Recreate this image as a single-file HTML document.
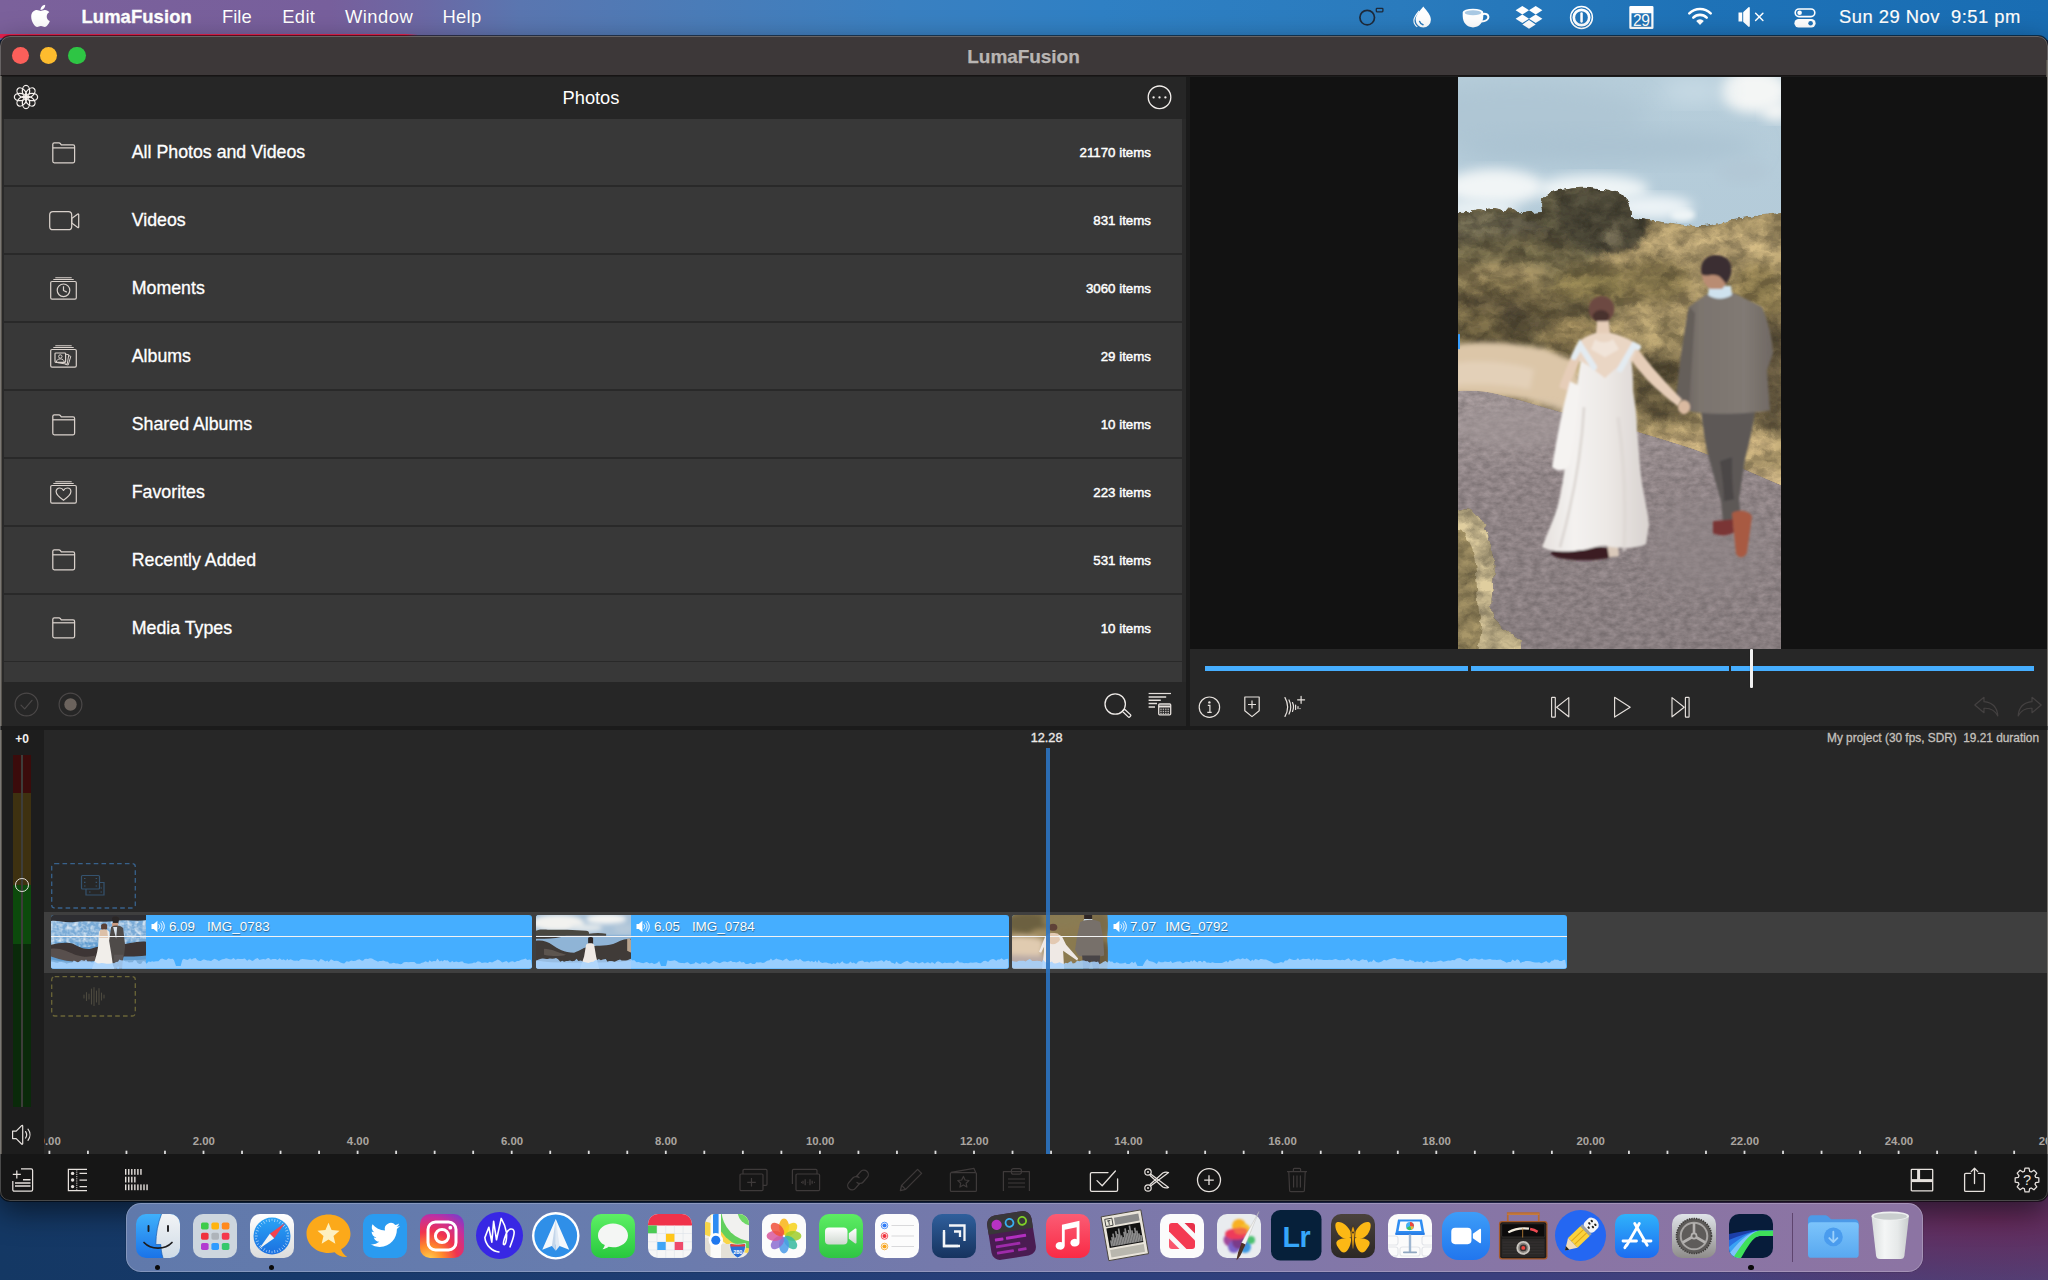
<!DOCTYPE html>
<html lang="en">
<head>
<meta charset="utf-8">
<title>LumaFusion</title>
<style>

*{box-sizing:border-box;margin:0;padding:0}
html,body{width:2048px;height:1280px;overflow:hidden;background:#1d3a69}
body{position:relative;font-family:"Liberation Sans",sans-serif;color:#fff;-webkit-font-smoothing:antialiased}
.abs{position:absolute}
svg{position:absolute;overflow:visible}
#desktop{position:absolute;left:0;top:0;width:2048px;height:1280px;
  background:
   linear-gradient(90deg,#e9214e 0,#e9214e 405px,rgba(233,33,78,0) 418px) 0 34px/2048px 4px no-repeat,
   linear-gradient(90deg,#7b619b 0,#775f9c 330px,#6c68a4 420px,#5a76b0 520px,#4a7cb8 700px,#3a80c1 900px,#2f80c4 1100px,#2a7bbd 1400px,#1e72b7 1700px,#196db3 2048px) 0 0/2048px 40px no-repeat,
   radial-gradient(ellipse 380px 80px at 1990px 1218px,#652a5a 0,rgba(101,42,90,0) 100%),
   linear-gradient(90deg,#143864 0,#17396a 300px,#1f3d73 700px,#2b3f7b 1100px,#3a3f7d 1500px,#47417c 1800px,#50437a 2048px) 0 1190px/2048px 90px no-repeat;
}
/* ---------- menu bar ---------- */
#menubar{position:absolute;left:0;top:0;width:2048px;height:34px;font-size:18.4px;line-height:34px;color:#fff;white-space:nowrap;text-shadow:0 0 1px rgba(0,0,0,.15)}
#menubar .mi{position:absolute;top:0;height:34px}
/* ---------- window ---------- */
#win{position:absolute;left:0;top:36px;width:2048px;height:1165px;border-radius:10px;overflow:hidden;background:#1c1c1c;
  box-shadow:0 0 0 1px rgba(0,0,0,.55),0 10px 30px rgba(0,0,0,.55)}
#win:after{content:"";position:absolute;left:0;top:0;right:0;bottom:0;border-radius:10px;border:1px solid rgba(255,255,255,.22);pointer-events:none}
#titlebar{position:absolute;left:0;top:0;width:100%;height:39.5px;background:#3d3839;border-bottom:1.5px solid #171414}
.tl{position:absolute;top:10.7px;width:17.4px;height:17.4px;border-radius:50%}
#wtitle{position:absolute;left:0;width:2047px;top:1.5px;height:38px;line-height:37.5px;text-align:center;font-weight:bold;font-size:19px;color:#b9b5b3;letter-spacing:-.05px;-webkit-text-stroke:.25px #b9b5b3}
#content{position:absolute;left:0;top:-36px;width:2048px;height:1280px}
/* ---------- library ---------- */
#libedge{position:absolute;left:0;top:76px;width:1.7px;height:1126px;background:#57534d}
#redge{position:absolute;left:2046.300px;top:60px;width:1.700px;height:1136px;background:#56524c}
#libhead{position:absolute;left:1.7px;top:76.5px;width:1184.3px;height:42.5px;background:#262626}
#libhead .t{position:absolute;left:2.8px;width:1173px;top:0;height:42px;line-height:41px;text-align:center;font-size:18.3px;color:#fff}
#liblist{position:absolute;left:1.7px;top:119px;width:1184.3px;height:563px;background:#292929;overflow:hidden}
.row{position:absolute;left:2.8px;width:1177.5px;height:66px;background:#383838}
.row .n{position:absolute;left:127.3px;top:1.2px;height:65px;line-height:65px;font-size:17.75px;color:#fff;white-space:nowrap;-webkit-text-stroke:.3px #fff}
.row .c{position:absolute;right:31px;top:0;height:66px;line-height:67.5px;font-size:13.3px;color:#fff;white-space:nowrap;-webkit-text-stroke:.45px #fff}
#libtool{position:absolute;left:1.7px;top:682px;width:1184.3px;height:44px;background:#262626}
#vsep{position:absolute;left:1186px;top:76px;width:4px;height:654px;background:#1b1b1b}
#hsep{position:absolute;left:0;top:726px;width:2048px;height:4px;background:#1b1b1b}
/* ---------- preview ---------- */
#pv{position:absolute;left:1190px;top:76.5px;width:857px;height:572.5px;background:#121212}
#pvctl{position:absolute;left:1190px;top:649px;width:857px;height:77px;background:#272727}
/* ---------- timeline ---------- */
#tlleft{position:absolute;left:1.7px;top:730px;width:42.3px;height:424px;background:#1d1d1d}
#tl{position:absolute;left:44px;top:730px;width:2003px;height:424px;background:#272727;overflow:hidden}
#track{position:absolute;left:0;top:181.5px;width:2003px;height:61px;background:#3f3f3f}
.clip{position:absolute;top:185px;height:54px;background:#45aeff;border-radius:3px;overflow:hidden}
.clip .lbl{position:absolute;top:2.6px;height:18px;line-height:18px;font-size:13.45px;color:#fff;white-space:pre;text-shadow:0.5px 1px 1px rgba(0,0,0,.45)}
.clip .wl{position:absolute;left:0;right:0;top:20.5px;height:1.3px;background:#f4f4f4}
.rl{position:absolute;top:403px;height:16px;line-height:16px;width:60px;margin-left:-30px;text-align:center;font-size:11.4px;font-weight:bold;color:#aaa5a0}
#tbar{position:absolute;left:0;top:1154px;width:2048px;height:48px;background:#161616}
/* ---------- dock ---------- */
#dock{position:absolute;left:126px;top:1203px;width:1796.5px;height:69px;border-radius:15px;
  background:linear-gradient(90deg,#6079ab 0,#677cae 25%,#7479ab 45%,#7e78aa 60%,#8975a5 80%,#8c74a3 100%);
  box-shadow:inset 0 0 0 1px rgba(255,255,255,.22),0 0 0 .5px rgba(0,0,0,.2)}
.di{position:absolute;top:1213.5px;width:44px;height:44px;border-radius:10px;overflow:hidden}
.dot{position:absolute;top:1264.500px;width:5.4px;height:5.4px;border-radius:50%;background:#0a0a0a}

</style>
</head>
<body>
<div id="desktop"></div>

<div id="menubar">
  <svg style="left:30.500px;top:3.600px" width="19" height="23.500" viewBox="0 20 384 470"><path fill="#fff" d="M318.7 268.7c-.2-36.7 16.4-64.4 50-84.8-18.8-26.9-47.200-41.700-84.700-44.600-35.500-2.800-74.300 20.700-88.500 20.700-15 0-49.400-19.700-76.400-19.700C63.300 141.200 4 184.800 4 273.500q0 39.300 14.400 81.200c12.800 36.700 59 126.700 107.200 125.200 25.200-.6 43-17.900 75.800-17.900 31.800 0 48.300 17.900 76.400 17.900 48.600-.7 90.400-82.500 102.600-119.300-65.200-30.700-61.700-90-61.700-91.900zm-56.600-164.200c27.300-32.400 24.800-61.900 24-72.500-24.100 1.400-52 16.400-67.900 34.900-17.500 19.800-27.800 44.300-25.600 71.900 26.100 2 49.900-11.400 69.500-34.300z"/></svg>
  <span class="mi" style="left:81.5px;font-weight:bold;letter-spacing:.1px;-webkit-text-stroke:.35px #fff">LumaFusion</span>
  <span class="mi" style="left:222px">File</span>
  <span class="mi" style="left:282.3px;letter-spacing:.3px">Edit</span>
  <span class="mi" style="left:345px;letter-spacing:.45px">Window</span>
  <span class="mi" style="left:442.5px;letter-spacing:.3px">Help</span>

  <!-- status icons -->
  <svg style="left:1355px;top:4px" width="34" height="28" viewBox="0 0 34 28">
    <circle cx="12.2" cy="13.6" r="7.3" fill="none" stroke="#1e2a3a" stroke-width="1.7"/>
    <rect x="21.3" y="4.4" width="6.6" height="3.4" rx=".7" fill="none" stroke="#1e2a3a" stroke-width="1.3"/>
  </svg>
  <svg style="left:1411px;top:5px" width="24" height="24" viewBox="0 0 24 24">
    <path fill="#fff" d="M12.3 1.6c3.6 4.6 7.6 8.600 7.600 13.200a7.600 7.600 0 0 1-15.200 0c0-4.600 4-8.600 7.600-13.200z"/>
    <path fill="none" stroke="#fff" stroke-width="1.1" d="M8.200 5.800c-3 3.600-5.300 6.400-5.300 9.700 0 2.600 1.300 4.900 3.400 6.300"/>
    <path fill="none" stroke="#2a7bbd" stroke-width="1.5" stroke-linecap="round" d="M8.600 16.400c.5 1.700 1.700 2.900 3.400 3.300"/>
  </svg>
  <svg style="left:1461px;top:6px" width="30" height="24" viewBox="0 0 30 24">
    <path fill="#fff" d="M1.700 6.500h20.600v3.600c0 6.500-4.100 11.300-10.300 11.300S1.700 16.600 1.700 10.100z"/>
    <path fill="none" stroke="#fff" stroke-width="2.100" d="M21.500 8.200c3.300-1.100 5.900.3 5.900 2.700 0 2.600-3.100 4.500-6.900 4.600"/>
    <ellipse cx="12" cy="6.300" rx="10.300" ry="3.600" fill="#fff"/>
    <ellipse cx="12" cy="6.700" rx="8.300" ry="2.500" fill="#a9c9e4"/>
  </svg>
  <svg style="left:1515px;top:5px" width="28" height="25" viewBox="0 0 28 25">
    <g fill="#fff"><path d="M7.300 .9l6.700 4.300-6.700 4.300L.6 5.200z"/><path d="M20.700 .9l6.700 4.300-6.700 4.300-6.700-4.300z"/>
    <path d="M7.300 9.500l6.700 4.300-6.700 4.300-6.700-4.300z"/><path d="M20.700 9.500l6.700 4.300-6.700 4.300-6.700-4.300z"/>
    <path d="M14 15.100l6.700 4.300-6.700 4.300-6.700-4.300z"/></g>
  </svg>
  <svg style="left:1569px;top:5px" width="25" height="25" viewBox="0 0 25 25">
    <circle cx="12.500" cy="12.500" r="10.900" fill="none" stroke="#fff" stroke-width="1.500"/>
    <circle cx="12.500" cy="12.500" r="7.700" fill="none" stroke="#fff" stroke-width="2.700"/>
    <rect x="11.300" y="7.300" width="2.500" height="10.400" rx="1.100" fill="#fff"/>
  </svg>
  <svg style="left:1628.500px;top:5.500px" width="25" height="23" viewBox="0 0 25 23">
    <path fill="#fff" d="M1.600 0h21.600a1.300 1.300 0 0 1 1.300 1.300v20.400a1.300 1.300 0 0 1-1.300 1.300H1.600a1.300 1.300 0 0 1-1.300-1.300V1.300A1.300 1.300 0 0 1 1.600 0zm.9 7.300v13.500h19.800V7.300z" fill-rule="evenodd"/>
    <text x="12.300" y="19.900" font-family="Liberation Sans, sans-serif" font-size="15.600" fill="#fff" text-anchor="middle" letter-spacing="-.4">29</text>
  </svg>
  <svg style="left:1687px;top:6px" width="26" height="20" viewBox="0 0 26 20">
    <g fill="none" stroke="#fff" stroke-width="2.600" stroke-linecap="round">
      <path d="M2.300 7.400a15.300 15.300 0 0 1 21.400 0"/>
      <path d="M6.300 11.600a9.500 9.500 0 0 1 13.400 0"/>
    </g>
    <path fill="#fff" d="M13 18.900l-3.800-4a5.400 5.400 0 0 1 7.600 0z"/>
  </svg>
  <svg style="left:1737px;top:6px" width="30" height="22" viewBox="0 0 30 22">
    <path fill="#fff" d="M1.500 6.600h4.300l5.700-5.300c.6-.5 1.300-.2 1.300.6v18.200c0 .8-.7 1.100-1.300.6l-5.700-5.300H1.500z"/>
    <path fill="none" stroke="#2878bb" stroke-width="1" d="M5.700 6v10"/>
    <path stroke="#fff" stroke-width="1.500" stroke-linecap="round" d="M18.600 7.200l7.300 7.300m0-7.300l-7.300 7.300"/>
  </svg>
  <svg style="left:1794px;top:8px" width="22" height="20" viewBox="0 0 22 20">
    <rect x="1.200" y="1" width="19.600" height="7.600" rx="3.800" fill="none" stroke="#fff" stroke-width="1.600"/>
    <circle cx="5.600" cy="4.800" r="2.300" fill="#fff"/>
    <rect x=".4" y="11" width="21.200" height="8.400" rx="4.200" fill="#fff"/>
    <circle cx="16.600" cy="15.200" r="2.300" fill="#1f72b7"/>
  </svg>
  <span class="mi" style="left:1839px;letter-spacing:.47px;-webkit-text-stroke:.2px #fff">Sun 29 Nov&nbsp; 9:51 pm</span>
</div>

<div id="win">
  <div id="titlebar">
    <span class="tl" style="left:11.5px;background:#fc5f5a"></span>
    <span class="tl" style="left:39.7px;background:#fdbc2e"></span>
    <span class="tl" style="left:68.2px;background:#2ec544"></span>
    <div id="wtitle">LumaFusion</div>
  </div>
  <div id="content">
<div id="libedge"></div><div id="redge"></div>
<div id="libhead"><div class="t">Photos</div></div>
<svg style="left:12.0px;top:82.9px" width="28" height="28" viewBox="-14 -14 28 28"><g fill="none" stroke="#f3efec" stroke-width="1.250"><ellipse cx="0" cy="-6.050" rx="3.700" ry="5.600" transform="rotate(0)"/><ellipse cx="0" cy="-6.050" rx="3.700" ry="5.600" transform="rotate(45)"/><ellipse cx="0" cy="-6.050" rx="3.700" ry="5.600" transform="rotate(90)"/><ellipse cx="0" cy="-6.050" rx="3.700" ry="5.600" transform="rotate(135)"/><ellipse cx="0" cy="-6.050" rx="3.700" ry="5.600" transform="rotate(180)"/><ellipse cx="0" cy="-6.050" rx="3.700" ry="5.600" transform="rotate(225)"/><ellipse cx="0" cy="-6.050" rx="3.700" ry="5.600" transform="rotate(270)"/><ellipse cx="0" cy="-6.050" rx="3.700" ry="5.600" transform="rotate(315)"/></g></svg>
<svg style="left:1146px;top:84px" width="27" height="27" viewBox="0 0 27 27"><circle cx="13.500" cy="13.300" r="11.300" fill="none" stroke="#f1edea" stroke-width="1.300"/><g fill="#f1edea"><circle cx="7.600" cy="13.400" r="1.150"/><circle cx="13.500" cy="13.400" r="1.150"/><circle cx="19.400" cy="13.400" r="1.150"/></g></svg>
<div id="liblist">
<div class="row" style="top:0.00px"><span class="n">All Photos and Videos</span><span class="c">21170 items</span></div>
<div class="row" style="top:67.93px"><span class="n">Videos</span><span class="c">831 items</span></div>
<div class="row" style="top:135.86px"><span class="n">Moments</span><span class="c">3060 items</span></div>
<div class="row" style="top:203.79px"><span class="n">Albums</span><span class="c">29 items</span></div>
<div class="row" style="top:271.72px"><span class="n">Shared Albums</span><span class="c">10 items</span></div>
<div class="row" style="top:339.65px"><span class="n">Favorites</span><span class="c">223 items</span></div>
<div class="row" style="top:407.58px"><span class="n">Recently Added</span><span class="c">531 items</span></div>
<div class="row" style="top:475.51px"><span class="n">Media Types</span><span class="c">10 items</span></div>
<div class="row" style="top:543.44px"></div>
</div>
<svg style="left:51.9px;top:141.8px" width="24" height="22" viewBox="0 0 24 22"><g fill="none" stroke="#d9d1cb" stroke-width="1.25" stroke-linejoin="round">
<path d="M.8 19.300V2.300c0-.9.600-1.500 1.500-1.500h4.600c.7 0 1.100.2 1.500.8l.9 1.300h11.800c.9 0 1.500.6 1.500 1.500v14.900c0 .9-.6 1.500-1.500 1.500H2.300c-.9 0-1.500-.6-1.500-1.500z"/>
<path d="M.8 5.800h21.800"/></g></svg>
<svg style="left:48.6px;top:210.7px" width="31" height="20" viewBox="0 0 31 20"><g fill="none" stroke="#d9d1cb" stroke-width="1.25" stroke-linejoin="round">
<rect x=".7" y=".7" width="22" height="18" rx="3.300"/>
<path d="M22.700 7.600l6.100-4.500c.5-.3.900-.1.900.5v12.400c0 .6-.4.800-.9.500l-6.100-4.500z"/></g></svg>
<svg style="left:50.1px;top:277.0px" width="27" height="23" viewBox="0 0 27 23"><g fill="none" stroke="#d9d1cb" stroke-width="1.200" stroke-linejoin="round">
<path d="M5.300 .7h16.400M3.300 2.500h20.400" stroke-width="1.100"/>
<rect x=".7" y="4.500" width="25.600" height="17.600" rx="1.300"/>
<circle cx="13.500" cy="13.300" r="6.300"/><path d="M13.500 9.300v4.200l3.300 1.600"/></g></svg>
<svg style="left:50.1px;top:344.9px" width="27" height="23" viewBox="0 0 27 23"><g fill="none" stroke="#d9d1cb" stroke-width="1.200" stroke-linejoin="round">
<path d="M5.300 .7h16.400M3.300 2.500h20.400" stroke-width="1.100"/>
<rect x=".7" y="4.500" width="25.600" height="17.600" rx="1.300"/>
<rect x="5" y="8" width="10.600" height="9.400" rx=".8"/><path d="M15.800 9.200l3 .6-1.600 9.400-9.800-1.500M18.800 10.600l2 .8-2.600 8.600-3-.7" stroke-width="1"/><circle cx="10.300" cy="11.500" r="1.700" stroke-width="1"/><path d="M6.300 17.200c.3-2.400 1.900-3.300 4-3.300s3.700.9 4 3.300" stroke-width="1"/></g></svg>
<svg style="left:51.9px;top:413.5px" width="24" height="22" viewBox="0 0 24 22"><g fill="none" stroke="#d9d1cb" stroke-width="1.25" stroke-linejoin="round">
<path d="M.8 19.300V2.300c0-.9.600-1.500 1.500-1.500h4.600c.7 0 1.100.2 1.500.8l.9 1.300h11.800c.9 0 1.500.6 1.500 1.500v14.900c0 .9-.6 1.500-1.500 1.500H2.300c-.9 0-1.500-.6-1.500-1.500z"/>
<path d="M.8 5.800h21.800"/></g></svg>
<svg style="left:50.1px;top:480.8px" width="27" height="23" viewBox="0 0 27 23"><g fill="none" stroke="#d9d1cb" stroke-width="1.200" stroke-linejoin="round">
<path d="M5.300 .7h16.400M3.300 2.500h20.400" stroke-width="1.100"/>
<rect x=".7" y="4.500" width="25.600" height="17.600" rx="1.300"/>
<path d="M13.500 19.300c-4.600-3.200-7.400-5.800-7.400-8.700 0-2.100 1.600-3.600 3.600-3.600 1.700 0 3 .9 3.800 2.400.8-1.500 2.100-2.400 3.800-2.400 2 0 3.600 1.500 3.600 3.600 0 2.900-2.800 5.500-7.400 8.700z"/></g></svg>
<svg style="left:51.9px;top:549.4px" width="24" height="22" viewBox="0 0 24 22"><g fill="none" stroke="#d9d1cb" stroke-width="1.25" stroke-linejoin="round">
<path d="M.8 19.300V2.300c0-.9.600-1.500 1.500-1.500h4.600c.7 0 1.100.2 1.500.8l.9 1.300h11.800c.9 0 1.500.6 1.500 1.500v14.900c0 .9-.6 1.500-1.500 1.500H2.300c-.9 0-1.500-.6-1.500-1.500z"/>
<path d="M.8 5.800h21.800"/></g></svg>
<svg style="left:51.9px;top:617.3px" width="24" height="22" viewBox="0 0 24 22"><g fill="none" stroke="#d9d1cb" stroke-width="1.25" stroke-linejoin="round">
<path d="M.8 19.300V2.300c0-.9.600-1.500 1.500-1.500h4.600c.7 0 1.100.2 1.500.8l.9 1.300h11.800c.9 0 1.500.6 1.500 1.500v14.900c0 .9-.6 1.500-1.500 1.500H2.300c-.9 0-1.500-.6-1.500-1.500z"/>
<path d="M.8 5.800h21.800"/></g></svg>
<div id="libtool"></div>
<svg style="left:13px;top:690.500px" width="27" height="27" viewBox="0 0 27 27"><g fill="none" stroke="#4b4848" stroke-width="1.200"><circle cx="13.500" cy="13.500" r="11.400"/><path d="M8 14.200l3.700 3.700 7.300-8.600" stroke-linecap="round" stroke-linejoin="round"/></g></svg>
<svg style="left:56.500px;top:690.500px" width="27" height="27" viewBox="0 0 27 27"><circle cx="13.500" cy="13.500" r="11.400" fill="none" stroke="#4b4848" stroke-width="1.200"/><circle cx="13.500" cy="13.500" r="6.200" fill="#6b635d"/></svg>
<svg style="left:1102px;top:691px" width="32" height="28" viewBox="0 0 32 28"><g fill="none" stroke="#efebe8" stroke-width="1.300"><circle cx="13.200" cy="13" r="10.200"/><path d="M20.300 20.300l2.300-2.100 6.100 5.700c.7.700-1.500 2.900-2.200 2.200z" stroke-linejoin="round"/></g></svg>
<svg style="left:1147px;top:690px" width="26" height="27" viewBox="0 0 26 27"><g fill="none" stroke="#e4dfdb">
<path d="M1.600 3.500h22.400" stroke-width="1.200"/><path d="M1.600 6.900h17.600M1.600 10.200h12.200M1.600 13.600h8.400M1.600 17h6.400" stroke-width="1.500"/>
<rect x="11.700" y="14" width="12" height="10.800" rx="1" stroke-width="1.300" fill="#262626"/><path d="M11.700 16.500h12" stroke-width="2"/>
<path d="M13.300 19.200h9M13.300 21.300h9M13.300 23.300h9" stroke-width="1" stroke-dasharray="1.400 1"/></g></svg>
<div id="vsep"></div><div id="hsep"></div>
<div id="pv"></div>

<svg style="left:1458px;top:76.500px" width="323" height="572.300" viewBox="0 0 323 572" preserveAspectRatio="none">
<defs>
<linearGradient id="sky" x1="0" y1="0" x2="0" y2="1"><stop offset="0" stop-color="#b6cdda"/><stop offset=".3" stop-color="#b4cbd9"/><stop offset=".52" stop-color="#bdd3df"/><stop offset=".62" stop-color="#d3e5ee"/><stop offset="1" stop-color="#d9e9f1"/></linearGradient>
<linearGradient id="pathg" x1="0" y1="0" x2="0" y2="1"><stop offset="0" stop-color="#9d9293"/><stop offset=".35" stop-color="#8e8385"/><stop offset="1" stop-color="#867c7e"/></linearGradient>
<linearGradient id="dressg" x1="0" y1="0" x2="1" y2="0"><stop offset="0" stop-color="#e6e1de"/><stop offset=".3" stop-color="#f4f2f0"/><stop offset=".62" stop-color="#ece8e5"/><stop offset="1" stop-color="#d9d3d0"/></linearGradient>
<linearGradient id="suitg" x1="0" y1="0" x2="1" y2="0"><stop offset="0" stop-color="#67605c"/><stop offset=".22" stop-color="#7b746e"/><stop offset=".7" stop-color="#817a74"/><stop offset="1" stop-color="#6f6863"/></linearGradient>
<filter id="b1" x="-10%" y="-10%" width="120%" height="120%"><feGaussianBlur stdDeviation=".8"/></filter>
<filter id="b2" x="-10%" y="-10%" width="120%" height="120%"><feGaussianBlur stdDeviation="2.500"/></filter>
<filter id="b5" x="-20%" y="-20%" width="140%" height="140%"><feGaussianBlur stdDeviation="6"/></filter>
<filter id="b9" x="-30%" y="-30%" width="160%" height="160%"><feGaussianBlur stdDeviation="11"/></filter>
<filter id="vegtex" x="0" y="0" width="100%" height="100%" color-interpolation-filters="sRGB">
  <feTurbulence type="fractalNoise" baseFrequency=".045 .07" numOctaves="4" seed="7" result="n"/>
  <feColorMatrix in="n" values="2.200 0 0 0 -.6  2.200 0 0 0 -.6  2.200 0 0 0 -.6  0 0 0 0 1" result="g"/>
  <feComposite in="SourceGraphic" in2="g" operator="arithmetic" k1=".42" k2=".77" k3="0" k4="0" result="m"/>
  <feComposite in="m" in2="SourceGraphic" operator="in"/>
</filter>
<filter id="pathtex" x="0" y="0" width="100%" height="100%" color-interpolation-filters="sRGB">
  <feTurbulence type="fractalNoise" baseFrequency=".12 .2" numOctaves="3" seed="12" result="n"/>
  <feColorMatrix in="n" values="1.500 0 0 0 -.25  1.500 0 0 0 -.25  1.500 0 0 0 -.25  0 0 0 0 1" result="g"/>
  <feComposite in="SourceGraphic" in2="g" operator="arithmetic" k1=".24" k2=".89" k3="0" k4="0" result="m"/>
  <feComposite in="m" in2="SourceGraphic" operator="in"/>
</filter>
<filter id="rough" x="-5%" y="-5%" width="110%" height="110%"><feTurbulence type="fractalNoise" baseFrequency=".12" numOctaves="2" seed="5" result="t"/><feDisplacementMap in="SourceGraphic" in2="t" scale="7" xChannelSelector="R" yChannelSelector="G"/></filter>
<clipPath id="pc"><rect x="0" y="0" width="323" height="572"/></clipPath>
<clipPath id="vegclip"><path d="M-12 139H0C4 135 8 134 12 136C16 131 22 131 28 134C32 130 38 130 44 133C50 130 58 131 62 138C70 134 78 135 84 134C82 126 84 119 90 117C96 113 104 113 112 111.500C122 110 132 110.500 140 112C148 112 158 114 165 118C170 124 173 132 173 140C180 142 192 143 205 145C216 146 226 148 236 149C244 150 252 148 260 146C270 143 280 141 290 140C300 138 312 137 323 136H335V440H-12Z"/></clipPath>
</defs>
<g clip-path="url(#pc)">
<rect width="323" height="572" fill="url(#sky)"/>
<!-- clouds -->
<ellipse cx="60" cy="40" rx="130" ry="34" fill="#afc6d4" filter="url(#b9)"/>
<ellipse cx="150" cy="70" rx="150" ry="16" fill="#aac2d1" filter="url(#b9)"/>
<ellipse cx="296" cy="14" rx="34" ry="22" fill="#f4f6f5" filter="url(#b5)"/>
<ellipse cx="318" cy="34" rx="14" ry="10" fill="#f4f6f5" filter="url(#b5)"/>
<ellipse cx="236" cy="14" rx="34" ry="12" fill="#c9dce6" filter="url(#b9)"/>
<ellipse cx="285" cy="94" rx="26" ry="12" fill="#b2c8d6" filter="url(#b5)"/>
<ellipse cx="36" cy="110" rx="50" ry="18" fill="#f1f5f6" filter="url(#b5)"/>
<ellipse cx="20" cy="132" rx="40" ry="10" fill="#e9f1f4" filter="url(#b5)"/>
<ellipse cx="135" cy="112" rx="56" ry="14" fill="#eef4f6" filter="url(#b5)"/>
<ellipse cx="195" cy="130" rx="40" ry="12" fill="#ecf3f6" filter="url(#b5)"/>
<ellipse cx="225" cy="138" rx="12" ry="6" fill="#eef4f6" filter="url(#b2)"/>
<!-- vegetation -->
<g filter="url(#rough)">
<g filter="url(#vegtex)">
<path d="M-12 139H0C4 135 8 134 12 136C16 131 22 131 28 134C32 130 38 130 44 133C50 130 58 131 62 138C70 134 78 135 84 134C82 126 84 119 90 117C96 113 104 113 112 111.500C122 110 132 110.500 140 112C148 112 158 114 165 118C170 124 173 132 173 140C180 142 192 143 205 145C216 146 226 148 236 149C244 150 252 148 260 146C270 143 280 141 290 140C300 138 312 137 323 136H335V440H-12Z" fill="#a08d62"/>
<g clip-path="url(#vegclip)">
<g filter="url(#b2)">
<path d="M-4 136c20-6 44-6 66-2 10-12 24-22 40-26 22-6 50-4 64 6 8 12 8 26 14 38-10 14-26 20-42 28-18 8-40 8-58 12-28 6-56 2-84-4z" fill="#58523e"/>
<path d="M98 124c16-16 60-16 82 0 12 10 12 28 4 40-14 12-40 16-58 10-16-8-30-32-28-50z" fill="#4a4534"/>
<ellipse cx="42" cy="164" rx="56" ry="24" fill="#575140"/>
<ellipse cx="80" cy="170" rx="30" ry="16" fill="#514b38"/>
<ellipse cx="22" cy="150" rx="24" ry="10" fill="#7a7359"/>
<ellipse cx="156" cy="160" rx="9" ry="11" fill="#726a52"/>
</g>
<g filter="url(#b5)">
<ellipse cx="50" cy="220" rx="112" ry="60" fill="#6f6545" opacity=".9"/>
<ellipse cx="40" cy="196" rx="50" ry="9" fill="#94835a"/>
<ellipse cx="46" cy="228" rx="66" ry="26" fill="#786b46"/>
<ellipse cx="150" cy="208" rx="56" ry="18" fill="#83744a"/>
<ellipse cx="36" cy="258" rx="42" ry="14" fill="#685c3e"/>
<ellipse cx="56" cy="236" rx="14" ry="12" fill="#4c4330"/>
<ellipse cx="196" cy="204" rx="36" ry="22" fill="#84744c"/>
<ellipse cx="258" cy="168" rx="70" ry="16" fill="#b39e70"/>
<ellipse cx="300" cy="222" rx="28" ry="36" fill="#8d7b50"/>
<ellipse cx="116" cy="258" rx="36" ry="18" fill="#958256"/>
<ellipse cx="70" cy="248" rx="30" ry="10" fill="#4f4632"/>
<ellipse cx="20" cy="226" rx="26" ry="8" fill="#5a5038"/>
<ellipse cx="120" cy="230" rx="26" ry="8" fill="#5e543a"/>
<ellipse cx="108" cy="270" rx="12" ry="8" fill="#5e5238"/>
<ellipse cx="208" cy="262" rx="34" ry="22" fill="#a39064"/>
<ellipse cx="208" cy="312" rx="36" ry="36" fill="#665a3e"/><ellipse cx="196" cy="290" rx="20" ry="16" fill="#5c5138"/>
<ellipse cx="314" cy="296" rx="18" ry="60" fill="#5e533a"/>
<ellipse cx="256" cy="368" rx="64" ry="12" fill="#c3aa7a"/>
<ellipse cx="300" cy="404" rx="30" ry="14" fill="#c3ab7e"/>
</g>
</g>
</g>
</g>
<!-- dry grass -->
<g filter="url(#b2)">
<path d="M-4 268c30-6 60-2 92 4l28 12 6 24-12 28c-30-14-70-20-114-20z" fill="#dcc6a8"/>
<path d="M-4 286c30-4 60 0 80 6l-4 20c-24-4-50-6-76-4z" fill="#e3d0b8"/>
</g>
<!-- path -->
<g filter="url(#pathtex)">
<path d="M0 314c14-1 28 0 40 3 20 5 40 11 60 17 26 7 52 13 78 20 20 6 40 12 58 18 30 11 58 23 87 36v166H0z" fill="url(#pathg)"/>
</g>
<ellipse cx="60" cy="350" rx="60" ry="22" fill="#a39899" opacity=".55" filter="url(#b5)"/>
<ellipse cx="250" cy="470" rx="60" ry="50" fill="#8f8587" opacity=".5" filter="url(#b9)"/>
<!-- left bottom grass -->
<g filter="url(#rough)"><g filter="url(#vegtex)">
<path d="M-4 434c12-6 24 0 30 14 7 16 10 30 10 46 0 16-4 32-2 46 6 8 16 14 30 24v12H-4z" fill="#bcad86"/>
<path d="M-4 452c10 0 16 10 20 26 4 24 2 50 8 70l-4 28H-4z" fill="#8e7f58"/>
</g></g>
<!-- groom -->
<g filter="url(#b1)">
<path d="M243 334c2 16 4 32 8 48 4 14 8 28 12 42l2 20h18l-2-22c2-14 4-26 6-40 4-16 8-32 10-48z" fill="#5d5957"/>
<path d="M262 384c2 14 4 28 4 40l10-2c-2-14-2-28-2-42z" fill="#4b4746"/>
<path d="M255 444l20-2 1 13c-6 4-14 4-21 1z" fill="#7a3434"/>
<path d="M274 436c6-4 16-3 20 3l-5 36c-2 6-9 7-11 1z" fill="#a85a42"/>
<path d="M231 230c8-6 14-10 21-15l21 0c10 5 20 9 31 15 6 14 10 30 11 46l-6 17 3 40c-22 4-58 5-80 1-2-6-8-10-11-16 2-14 4-28 5-42 0-16 2-32 5-46z" fill="url(#suitg)"/>
<path d="M231 230c-4 22-8 44-10 64-1 10-2 18-3 26l13 8c2-30 4-62 6-92z" fill="#655e5a"/>
<path d="M251 209h22l1 9c-8 5-17 5-24 0z" fill="#cfe2ee"/>
<path d="M243 190c0 10 3 18 9 22h12c6-6 8-14 8-22z" fill="#b98c73"/>
<path d="M244 198c-3-12 3-20 14-20 12 0 17 8 15 19-1 4-3 7-5 10-3-4-6-9-12-9-5 0-8 1-12 0z" fill="#3a2e32"/>
<ellipse cx="226" cy="330" rx="6" ry="7" fill="#d9b9a0"/>
</g>
<!-- bride -->
<g filter="url(#b1)">
<ellipse cx="126" cy="476" rx="33" ry="7" fill="#3a1f24"/>
<path d="M149 466l11 0 1 13-10 1z" fill="#dac9ba"/>
<path d="M180 272c12 16 28 34 44 50l-4 7c-18-13-36-30-48-48z" fill="#e6cdb8"/>
<path d="M118 268c-6 14-12 28-17 42l8 3c5-13 11-26 17-38z" fill="#e6cdb8"/>
<path d="M118 270c2-8 12-12 22-15l11 0c10 3 22 6 29 14-2 10-8 18-12 26l-20 8-20-8c-4-8-8-16-10-25z" fill="#ead6c4"/>
<path d="M137 262c4 4 14 4 18 0l6 10-14 8-14-8z" fill="#f1e4d9"/>
<path d="M121 283c8 4 16 10 26 18 8-8 16-14 26-18 2 10 2 20 2 30 2 14 4 26 4 40 2 16 2 30 4 46 2 16 6 30 8 48l-3 20c-12 5-26 4-38 2-10-2-18 4-28 4-12 2-28 2-38-3 5-14 12-28 16-42 4-16 6-32 8-48 0-16 4-30 8-46 2-18 4-36 7-52z" fill="url(#dressg)"/>
<path d="M112 304c-8 28-13 56-18 86 6 5 14 4 18-3 4-26 8-52 10-78z" fill="#f5f3f1"/>
<path d="M126 330c-2 40-10 90-24 140" fill="none" stroke="#d6d0cc" stroke-width="3" opacity=".7"/>
<path d="M160 340c6 40 8 90 6 134" fill="none" stroke="#dcd6d2" stroke-width="4" opacity=".6"/>
<path d="M116 280l6-12 14 22M180 270l-4-2-14 24" fill="none" stroke="#e3ebf1" stroke-width="6" stroke-linecap="round"/>
<ellipse cx="143.500" cy="232" rx="12.800" ry="13.200" fill="#6d4a42"/>
<ellipse cx="143" cy="239" rx="8.500" ry="6" fill="#4a312e"/>
<path d="M139 244h12l1 12h-14z" fill="#e6cdb8"/>
</g>
<!-- small blue marker at left edge -->
<rect x="0" y="257" width="2" height="15" fill="#3aa0ff"/>
</g>
</svg>
<div id="pvctl"></div>
<div class="abs" style="left:1204.5px;top:665.700px;width:263.8px;height:5.400px;background:#46aeff"></div>
<div class="abs" style="left:1470.7px;top:665.700px;width:258.5px;height:5.400px;background:#46aeff"></div>
<div class="abs" style="left:1731.2px;top:665.700px;width:303.3px;height:5.400px;background:#46aeff"></div>
<div class="abs" style="left:1749.500px;top:649px;width:3px;height:38.500px;background:#f2f2f2;border-radius:1px;box-shadow:0 0 1px rgba(0,0,0,.6)"></div>
<svg style="left:1197px;top:694.500px" width="25" height="25" viewBox="0 0 25 25"><circle cx="12.400" cy="12.200" r="10.200" fill="none" stroke="#e6e1dd" stroke-width="1.200"/>
<circle cx="12.400" cy="7.400" r="1.200" fill="#e6e1dd"/><path d="M10.800 10.400h2.100v6.600M10.300 17.300h4.400" fill="none" stroke="#e6e1dd" stroke-width="1.200"/></svg>
<svg style="left:1243px;top:696px" width="18" height="23" viewBox="0 0 18 23"><g fill="none" stroke="#e6e1dd" stroke-width="1.200" stroke-linejoin="round"><path d="M1.800 1h14.400v13.800L9 20.600 1.800 14.800z"/><path d="M9 4.500v8M5 8.500h8"/></g></svg>
<svg style="left:1283px;top:695px" width="26" height="24" viewBox="0 0 26 24"><g fill="none" stroke="#e6e1dd" stroke-width="1.200" stroke-linecap="round"><path d="M2 2.600c3.200 5.600 3.200 13 0 18.800"/><path d="M6 5c2.200 4.400 2.200 9.600 0 14"/><path d="M9.500 7.600c1.300 2.800 1.300 6 0 8.800"/><path d="M12.600 10v4.400M15 11.600v2"/><path d="M14.600 4.800h7M18.100 1.300v7"/></g><circle cx="17" cy="13.600" r=".7" fill="#e6e1dd"/></svg>
<svg style="left:1549px;top:695px" width="24" height="24" viewBox="0 0 24 24"><g fill="none" stroke="#e6e1dd" stroke-width="1.150" stroke-linejoin="round"><rect x="2.600" y="2.300" width="3.700" height="19.800" rx=".6"/><path d="M19.800 2.600v19.200L7.600 12.200z"/></g></svg>
<svg style="left:1610px;top:695px" width="24" height="24" viewBox="0 0 24 24"><path d="M4.600 2.300l15.600 9.900L4.600 22.100z" fill="none" stroke="#e6e1dd" stroke-width="1.150" stroke-linejoin="round"/></svg>
<svg style="left:1668px;top:695px" width="24" height="24" viewBox="0 0 24 24"><g fill="none" stroke="#e6e1dd" stroke-width="1.150" stroke-linejoin="round"><rect x="17.400" y="2.300" width="3.700" height="19.800" rx=".6"/><path d="M4 2.600v19.200l12.200-9.600z"/></g></svg>
<svg style="left:1973px;top:695px" width="28" height="24" viewBox="0 0 28 24"><path d="M11 2.300L1.800 10l9.200 7.700v-4.400c6-.4 10.600 1.600 13.800 7.600-.6-8.600-5.400-13.400-13.800-14.200z" fill="none" stroke="#444141" stroke-width="1.200" stroke-linejoin="round"/></svg>
<svg style="left:2015px;top:695px" width="28" height="24" viewBox="0 0 28 24"><path d="M17 2.300l9.200 7.700-9.200 7.700v-4.400c-6-.4-10.600 1.600-13.800 7.600.6-8.600 5.400-13.400 13.800-14.200z" fill="none" stroke="#444141" stroke-width="1.200" stroke-linejoin="round"/></svg>
<div id="tlleft"></div>
<div id="tl">
<div id="track"></div>
<svg style="left:7px;top:132.500px" width="85" height="46" viewBox="0 0 85 46"><rect x=".7" y=".7" width="83.600" height="44.300" rx="3" fill="none" stroke="#38628c" stroke-width="1.300" stroke-dasharray="4.600 3.200"/>
<g fill="none" stroke="#35536f" stroke-width="1.200"><rect x="30.500" y="12.500" width="18" height="13.500" rx="1"/><path d="M48.600 19.500h4.400v12.500H35v-6"/><path d="M33 15.500h1.500M33 19.300h1.500M33 23h1.500M44.600 15.500h1.500M44.600 19.300h1.500M44.600 23h1.500M38 29h1.500M49.500 29h1.500M49.500 25h1.500"/></g></svg>
<svg style="left:7px;top:246px" width="85" height="41" viewBox="0 0 85 41"><rect x=".7" y=".7" width="83.600" height="39.300" rx="3" fill="none" stroke="#6b6638" stroke-width="1.300" stroke-dasharray="4.600 3.200"/>
<g fill="none" stroke="#4d4a3f" stroke-width="1.100" stroke-linecap="round"><path d="M33 19v3M35.500 16.500v8M38 18v5M40.500 13v15M43 11.500v18M45.500 15v11M48 12.500v16M50.500 17v7M53 19v3"/></g></svg>
<div class="clip" style="left:7.20px;width:481.30px"><div class="abs" style="left:0;top:0;width:95.200px;height:53.500px;overflow:hidden"><svg style="left:0;top:0" width="95.200" height="53.500" viewBox="0 0 95 54" preserveAspectRatio="none">
<defs><filter id="t1b"><feGaussianBlur stdDeviation=".7"/></filter><filter id="t1t" x="0" y="0" width="100%" height="100%"><feTurbulence type="fractalNoise" baseFrequency=".25" numOctaves="2" seed="3"/><feColorMatrix values="0 0 0 0 1  0 0 0 0 1  0 0 0 0 1  1.500 1.200 0 0 -1.100"/></filter></defs>
<rect width="95" height="54" fill="#5f9bd0"/>
<rect y="5" width="95" height="22" fill="#79aad6"/>
<rect y="6" width="95" height="26" filter="url(#t1t)" opacity=".8"/>
<g filter="url(#t1b)">
<path d="M0 0h95v5c-10 2-20-1-32 1-12 2-26-1-40 1C14 8 6 5 0 6z" fill="#2f2e30"/>
<path d="M0 30c8-2 16-3 22-1 6 3 10 6 18 5 8-2 14-6 24-4 10 1 20-4 31-3v14c-12 2-20 0-30 2-10 1-22-2-32 0-12 2-22-2-33-4z" fill="#3d3534"/>
<path d="M0 34c10-1 16 3 24 6 6 2 14 3 20 1l2 5c-14 3-30 2-46-4z" fill="#59504d"/>
<path d="M0 45c20 4 40 2 60 1 12-1 24 0 35-1v9H0z" fill="#7fb0dc"/>
<path d="M50 10c2-2 5-2 6 0l0 4c-1 2-5 2-6 0z" fill="#5a4036"/>
<path d="M48 17c2-3 8-3 10 0l2 14c2 8 3 14 5 23H41c3-8 5-15 6-22z" fill="#f1eeea"/>
<path d="M49 15h7l1 8h-9z" fill="#dcc0a8"/>
<path d="M61 3c2-2 6-2 7 1l-1 5h-5z" fill="#2c2626"/>
<path d="M61 8h6l0 5h-6z" fill="#c99a80"/>
<path d="M60 12c4-2 8-2 12 1l2 18-1 9-3 12h-8l-2-14-2-12z" fill="#504b4a"/>
<path d="M62 12h4l-1 12z" fill="#d8e2ea"/>
<path d="M63 40h9l-1 14h-3l-1-8-1 8h-3z" fill="#5a5555"/>
</g>
</svg></div><svg style="left:0;top:0" width="481.3" height="53.500"><polygon points="0,53.5 0.0,46.5 2.5,46.7 4.5,47.4 6.6,47.7 8.2,47.0 10.4,47.0 12.9,47.5 14.4,48.1 15.6,48.7 16.9,48.3 19.3,47.8 21.2,47.8 22.8,45.5 25.1,46.6 26.7,47.7 28.9,46.1 30.7,45.1 31.9,45.6 33.7,45.7 35.0,44.5 36.6,46.5 39.2,46.4 40.7,47.4 43.0,47.0 44.8,47.2 46.2,48.3 48.0,48.6 50.6,47.9 53.0,48.3 55.4,48.7 58.0,48.7 60.3,48.6 61.6,48.0 63.1,48.2 65.0,47.0 67.0,46.8 68.4,44.5 69.9,45.3 72.4,45.5 74.9,46.5 76.2,46.3 77.8,47.5 80.1,47.2 81.6,47.2 83.1,45.3 85.1,45.6 86.6,48.1 88.4,48.9 90.2,48.8 91.9,46.0 94.0,46.5 95.4,48.8 97.9,46.2 99.1,47.0 101.3,46.2 102.6,46.7 105.1,46.3 107.4,46.2 109.5,44.1 111.3,43.5 113.3,44.4 115.3,45.1 117.4,43.3 119.7,43.9 121.7,43.7 123.0,45.2 125.0,51.0 127.2,51.0 129.7,51.0 131.3,45.0 132.8,43.8 134.6,44.5 136.7,45.0 139.0,43.3 140.8,44.6 142.2,43.4 144.6,43.1 146.1,45.0 147.7,45.7 149.8,45.9 152.2,44.6 153.5,44.6 154.7,44.9 156.4,45.5 157.8,45.6 160.1,45.9 161.4,44.9 163.5,43.7 166.0,44.8 167.9,46.0 169.7,45.1 171.3,44.3 173.3,43.9 175.0,43.2 176.3,43.6 177.7,44.0 180.2,44.4 182.6,43.1 184.5,44.8 186.7,43.8 188.9,43.9 191.5,44.1 193.8,43.6 196.2,45.8 198.0,44.2 199.9,45.1 201.1,45.9 202.8,45.3 204.2,44.0 206.6,43.1 208.5,45.1 210.0,44.6 212.2,44.1 214.6,44.6 216.3,43.2 217.8,43.1 219.8,44.8 221.7,43.9 222.9,44.1 224.7,44.0 226.6,45.1 228.6,43.3 231.0,44.9 232.4,44.3 234.9,45.5 236.3,43.8 237.7,45.3 239.2,44.3 240.9,44.8 242.2,45.4 244.1,45.8 246.1,45.6 247.8,46.0 249.3,44.6 251.3,43.9 253.7,44.2 256.0,44.6 257.6,44.8 260.2,45.0 261.8,44.7 263.1,44.3 265.4,45.2 267.6,46.7 269.7,44.1 271.1,44.5 273.0,45.4 274.3,46.6 276.3,45.4 277.7,46.9 280.0,44.2 281.4,45.1 283.2,45.9 285.1,45.7 287.1,46.1 289.5,47.4 291.7,48.2 293.2,48.6 295.6,46.3 298.0,46.7 300.1,45.4 302.4,46.1 304.6,45.7 306.4,44.7 308.6,44.3 310.3,45.5 312.0,45.7 313.7,43.9 315.2,43.8 316.9,44.0 318.9,43.2 321.0,43.5 323.5,44.9 325.8,46.0 327.0,46.7 328.4,46.0 330.3,45.9 332.3,45.5 334.7,46.6 336.9,46.8 338.4,48.6 340.3,48.6 342.8,47.7 344.8,48.6 346.9,48.4 349.1,49.3 350.7,48.9 352.9,47.2 355.2,47.0 357.7,47.2 359.5,47.1 361.0,47.1 363.3,47.0 365.6,48.8 367.7,48.7 369.0,48.8 370.8,47.7 372.3,47.6 374.6,46.2 377.2,47.4 378.5,45.3 380.6,46.8 382.8,45.9 384.8,46.3 386.4,43.6 388.8,46.5 390.4,45.4 391.7,46.6 393.1,45.1 395.1,45.5 396.6,45.3 399.0,47.6 401.3,45.9 402.8,47.2 405.2,46.6 407.8,47.2 410.0,46.6 411.7,46.4 413.0,48.0 414.9,48.2 417.2,48.8 419.3,48.6 421.5,48.2 422.9,47.5 424.7,47.7 426.7,46.2 429.1,46.7 430.8,48.0 433.3,47.5 435.0,47.5 436.7,48.1 438.7,46.7 441.1,47.4 443.4,46.3 444.6,45.7 446.6,44.4 448.9,45.6 451.2,47.6 453.4,46.7 455.5,46.0 457.6,47.7 459.9,46.4 461.7,46.3 463.8,47.3 466.0,46.0 467.8,45.9 470.2,44.8 472.6,44.2 474.6,43.5 476.3,45.1 478.6,44.4 480.0,45.0 481.3,53.5" fill="#a6d3ff" opacity=".86"/></svg><div class="wl"></div><svg style="left:100.3px;top:4.800px" width="14" height="13" viewBox="0 0 14 13"><path d="M.5 4h2.300L6.400 .8v11.400L2.800 9H.5z" fill="#fff"/><g fill="none" stroke="#fff" stroke-width="1" stroke-linecap="round"><path d="M8 4.600c.9 1.100.9 2.700 0 3.800"/><path d="M9.700 3c1.800 2 1.800 5 0 7"/><path d="M11.400 1.500c2.600 2.900 2.600 7.100 0 10"/></g></svg><span class="lbl" style="left:117.700px">6.09</span><span class="lbl" style="left:155.7px">IMG_0783</span></div>
<div class="clip" style="left:492.20px;width:472.60px"><div class="abs" style="left:0;top:0;width:95.200px;height:53.500px;overflow:hidden"><svg style="left:0;top:0" width="95.200" height="53.500" viewBox="0 0 95 54" preserveAspectRatio="none">
<defs><filter id="t2b"><feGaussianBlur stdDeviation=".7"/></filter><filter id="t2c"><feGaussianBlur stdDeviation="2"/></filter></defs>
<rect width="95" height="54" fill="#9dbbd6"/>
<rect y="0" width="95" height="20" fill="#a9c2d8"/>
<g filter="url(#t2c)"><ellipse cx="22" cy="8" rx="26" ry="8" fill="#f2f2ef"/><ellipse cx="70" cy="4" rx="20" ry="5" fill="#f4f4f2"/><ellipse cx="50" cy="13" rx="16" ry="4" fill="#dfe6ea"/><ellipse cx="88" cy="14" rx="10" ry="5" fill="#b5c9da"/></g>
<rect y="20" width="95" height="34" fill="#8fb4d6"/>
<g filter="url(#t2b)">
<path d="M0 16c4-2 8-1 14-1 10 0 24 0 36 1 2 0 3 1 3 3 6-1 12-1 17 0v2H0z" fill="#4a4640"/>
<path d="M0 21h30c-6 2-14 3-22 3H0z" fill="#3c3835"/>
<path d="M0 26c6-1 12 1 16 4 6 4 12 8 22 8 6-2 10-6 16-6 8-2 18 0 26-4 6-3 10-4 15-4v24c-14 2-28 0-40 2-12 1-20-2-30-2-10 1-18 0-25-2z" fill="#403a37"/>
<path d="M8 34c8 0 14 4 22 6-6 2-14 2-22 0z" fill="#5c5450"/>
<path d="M0 46c16 3 34 2 50 2 16 0 30 0 45-2v8H0z" fill="#a5b5d2"/>
<path d="M52 23c1-1 4-1 5 0v6h-5z" fill="#2e2828"/>
<path d="M50 30c2-2 6-2 8 0l2 12 3 12H44l4-12z" fill="#efe9e4"/>
<path d="M91 24c2-1 4 0 4 2v12l-4-2z" fill="#b9a48e"/>
</g>
</svg></div><svg style="left:0;top:0" width="472.6" height="53.500"><polygon points="0,53.5 0.0,46.4 1.2,45.2 2.6,44.5 5.0,43.7 6.7,43.5 8.9,43.7 10.1,43.9 11.8,44.0 13.8,43.5 16.3,43.7 18.4,43.6 20.0,43.1 22.1,44.2 24.3,46.7 26.2,45.7 28.1,46.8 30.2,46.1 32.0,46.0 34.0,45.6 36.1,46.3 38.7,45.8 40.5,43.7 42.4,45.9 44.9,45.6 46.6,46.4 48.0,47.0 50.3,47.4 52.5,47.9 54.9,46.9 57.3,46.8 59.3,45.2 61.1,44.9 62.8,43.9 64.9,45.3 66.8,44.5 68.2,44.3 69.8,44.1 71.5,46.7 73.0,45.9 74.6,46.1 76.1,45.9 78.6,46.7 80.3,46.0 81.8,45.2 84.1,44.5 85.6,45.6 86.9,45.5 89.4,45.4 91.3,45.2 93.1,44.6 94.4,43.8 96.7,45.4 98.1,45.0 100.5,47.2 102.6,46.9 105.0,47.8 107.4,48.2 109.0,47.4 110.9,47.0 113.5,48.4 115.9,47.8 118.0,48.9 119.3,48.8 121.2,47.9 123.2,46.1 125.1,51.0 127.7,51.0 130.0,51.0 131.5,45.2 133.9,46.1 136.2,45.7 138.7,45.3 141.0,46.3 142.6,47.5 145.1,48.0 146.8,47.9 148.4,48.2 150.2,47.4 151.8,47.2 154.4,49.2 156.9,48.8 158.3,48.6 159.7,47.0 162.0,48.2 164.3,49.1 166.0,47.2 168.0,47.8 169.3,47.0 171.4,48.5 172.7,48.9 174.5,48.2 176.4,46.9 177.6,46.1 179.2,46.5 181.7,47.5 183.7,48.2 186.2,47.1 187.7,46.4 189.3,46.5 191.3,47.3 193.2,46.4 195.0,45.8 196.5,47.0 198.7,46.9 200.3,47.4 202.5,46.7 203.9,46.0 205.4,47.6 207.8,47.1 209.7,49.1 211.4,48.9 212.7,48.7 214.5,47.7 216.6,48.9 219.0,49.0 220.3,47.3 222.7,47.5 224.5,47.3 226.9,47.9 228.6,47.5 231.0,45.8 233.5,45.3 234.9,43.4 236.7,45.6 238.8,44.4 240.4,43.5 241.8,44.3 243.1,44.6 245.5,45.0 246.7,45.7 249.0,44.2 250.6,43.6 252.3,45.1 253.8,46.0 255.1,45.4 257.6,45.5 260.0,44.1 262.5,45.3 263.9,43.8 266.2,45.8 267.6,46.4 269.4,46.5 270.9,46.0 272.7,45.7 274.3,46.7 275.8,46.0 278.0,47.2 279.6,45.5 281.1,47.8 282.7,45.1 284.2,47.1 286.2,48.1 288.5,47.6 290.6,47.6 292.5,48.3 294.4,48.5 295.7,49.2 297.6,48.0 299.5,49.0 301.6,47.3 303.5,48.7 305.1,47.2 306.4,46.3 307.8,48.0 310.2,48.7 312.5,48.6 314.5,46.6 316.2,48.2 317.5,47.5 320.1,49.1 322.3,46.4 324.1,46.0 326.4,45.5 328.7,47.3 330.0,46.7 331.9,46.8 333.2,47.8 335.1,46.3 337.4,46.8 339.4,45.9 341.4,46.6 343.7,45.7 345.9,45.2 347.9,47.1 350.0,44.9 352.3,46.0 353.9,45.8 355.6,47.8 357.1,48.0 359.0,49.1 360.3,46.6 362.6,48.5 364.9,49.1 366.8,47.8 369.2,46.6 371.4,45.8 373.8,47.6 375.7,47.7 377.7,48.3 379.6,46.8 381.3,47.8 383.0,48.4 384.6,47.8 386.6,46.9 388.8,48.4 390.7,47.5 392.0,47.3 394.3,48.4 395.6,47.2 396.9,47.5 398.9,49.1 400.1,47.2 401.9,46.3 403.9,47.1 406.3,48.4 408.8,47.6 410.5,48.0 412.8,47.7 415.1,47.8 417.6,48.4 419.8,46.7 421.9,45.4 423.4,47.5 426.0,47.5 428.1,48.3 430.0,48.1 432.2,48.3 434.3,47.4 436.7,47.8 438.6,47.4 440.3,47.2 442.7,47.9 444.4,48.3 445.8,47.4 447.6,46.1 449.6,45.7 452.1,47.1 454.0,44.9 455.8,44.2 457.1,43.9 458.4,44.5 460.3,45.7 461.8,44.5 463.7,44.6 465.5,43.3 467.9,44.9 470.1,44.1 472.2,43.8 472.6,53.5" fill="#a6d3ff" opacity=".86"/></svg><div class="wl"></div><svg style="left:100.3px;top:4.800px" width="14" height="13" viewBox="0 0 14 13"><path d="M.5 4h2.300L6.400 .8v11.400L2.800 9H.5z" fill="#fff"/><g fill="none" stroke="#fff" stroke-width="1" stroke-linecap="round"><path d="M8 4.600c.9 1.100.9 2.700 0 3.800"/><path d="M9.700 3c1.800 2 1.800 5 0 7"/><path d="M11.400 1.500c2.600 2.900 2.600 7.100 0 10"/></g></svg><span class="lbl" style="left:117.700px">6.05</span><span class="lbl" style="left:155.7px">IMG_0784</span></div>
<div class="clip" style="left:968.40px;width:554.60px"><div class="abs" style="left:0;top:0;width:95.200px;height:53.500px;overflow:hidden"><svg style="left:0;top:0" width="95.200" height="53.500" viewBox="0 0 95 54" preserveAspectRatio="none">
<defs><filter id="t3b"><feGaussianBlur stdDeviation=".7"/></filter><filter id="t3c"><feGaussianBlur stdDeviation="2.500"/></filter></defs>
<rect width="95" height="54" fill="#8d7a50"/>
<g filter="url(#t3c)">
<ellipse cx="16" cy="8" rx="22" ry="10" fill="#6c6040"/><ellipse cx="50" cy="6" rx="20" ry="8" fill="#8a7b52"/><ellipse cx="86" cy="10" rx="12" ry="12" fill="#7a6c48"/>
<ellipse cx="30" cy="20" rx="12" ry="6" fill="#a08c60"/><ellipse cx="60" cy="30" rx="12" ry="14" fill="#8a7a50"/>
<path d="M-4 22c14-2 26 0 36 4l-2 16c-10 4-22 6-34 6z" fill="#e0cbb0"/>
<path d="M-4 40c14 0 28 2 40 0v16H-4z" fill="#b9aaa6"/>
<ellipse cx="90" cy="40" rx="8" ry="14" fill="#6a5c40"/>
</g>
<g filter="url(#t3b)">
<path d="M37 11c1-3 7-3 8 0 1 3-1 5-4 5s-5-2-4-5z" fill="#5e4238"/>
<path d="M33 22c3-4 13-4 17 0l4 8 12 14-1 2-14-10 1 18H30c1-8 2-16 2-22l-3 6-2-1z" fill="#efe9e5"/>
<path d="M36 19c2-1 8-1 10 0l2 6c-4 6-10 6-14 0z" fill="#e3c9b2"/>
<path d="M72 0h8v5h-8z" fill="#2e2626"/><path d="M72 4h8l1 3h-10z" fill="#cfe0ea"/>
<path d="M68 7c6-3 14-3 20 0l3 16 1 18c-8 2-20 2-26 0l-3-6 2-14z" fill="#77706b"/>
<path d="M70 41h18l-1 13h-6l-2-8-2 8h-6z" fill="#4a4546"/>
</g>
</svg></div><svg style="left:0;top:0" width="554.6" height="53.500"><polygon points="0,53.5 0.0,46.1 2.3,46.5 4.8,46.7 6.9,45.7 9.5,45.8 12.0,45.8 13.6,46.4 15.7,45.0 18.0,44.0 20.2,46.0 22.8,46.1 25.2,45.8 26.9,46.0 28.1,45.9 29.8,47.0 31.1,44.7 33.1,46.9 34.4,47.5 36.0,47.9 38.1,47.3 39.8,46.5 41.5,48.2 43.2,48.4 45.6,48.1 47.4,47.3 49.6,48.2 51.7,49.1 53.7,47.7 55.5,48.2 57.9,46.7 59.2,46.1 60.8,48.4 63.0,47.9 65.1,45.8 67.5,46.3 70.0,45.6 72.0,45.4 74.1,46.3 75.4,46.0 77.4,47.6 79.9,46.8 82.2,46.5 84.3,47.1 86.1,46.5 87.5,49.3 89.8,48.1 91.2,47.1 93.4,45.9 95.7,47.4 96.9,45.2 98.5,46.7 100.2,46.4 101.7,47.9 103.1,48.3 104.4,47.3 106.3,47.7 107.5,48.4 109.2,48.6 111.6,48.3 113.3,47.6 114.8,48.9 117.4,49.0 120.0,46.8 121.6,48.2 123.2,46.5 125.5,51.0 126.8,51.0 128.3,51.0 130.6,51.0 133.1,46.4 135.2,44.1 137.0,46.0 139.3,46.5 140.6,46.8 142.4,47.4 144.7,49.0 146.6,46.3 148.6,47.3 151.2,47.2 152.9,46.4 155.5,47.1 157.2,46.9 158.8,46.1 160.3,48.1 162.7,47.3 165.2,46.5 166.7,46.6 168.2,46.3 170.7,48.3 172.0,47.8 173.6,46.8 175.6,46.8 177.7,47.2 179.1,45.2 180.3,46.7 182.1,45.1 183.9,46.4 185.5,47.6 186.7,45.9 188.8,45.9 190.2,47.5 191.6,45.7 193.0,46.1 194.7,47.8 196.4,47.5 198.4,48.0 200.4,47.3 202.9,48.0 204.3,48.0 205.8,48.1 207.9,48.0 210.0,47.9 212.2,47.0 214.4,45.9 215.9,47.5 217.8,45.0 220.1,46.1 222.2,45.3 224.4,44.0 226.5,43.6 228.2,44.5 230.6,43.2 233.0,44.2 234.6,43.2 236.3,44.2 238.8,46.3 240.2,44.6 241.7,45.7 243.2,44.0 245.1,44.5 246.8,45.3 248.3,44.1 249.8,43.9 251.9,44.6 254.1,44.4 256.2,45.6 257.9,46.3 260.4,47.5 262.0,48.4 264.5,48.3 266.4,48.0 269.0,47.1 271.3,47.8 273.0,45.6 275.2,45.4 277.4,43.4 279.8,44.5 281.6,45.0 283.2,45.1 284.7,44.6 285.9,43.1 287.4,45.1 289.0,44.6 290.9,43.8 293.2,44.0 294.7,44.1 297.1,43.5 299.4,45.5 301.2,43.3 302.4,45.4 304.9,43.6 306.2,44.4 308.0,44.4 309.2,44.6 311.4,45.1 313.4,45.0 315.2,44.9 317.5,44.7 320.0,45.0 322.6,44.2 323.9,44.0 326.1,45.1 328.4,45.3 330.1,44.8 332.7,45.3 334.8,44.1 336.7,43.2 339.2,45.9 341.5,44.3 343.3,44.6 345.0,45.4 347.2,46.2 349.2,44.8 350.9,44.2 352.6,44.9 354.8,44.7 356.5,47.6 358.1,46.4 359.9,46.8 361.5,44.4 364.1,47.1 366.2,47.4 367.6,47.3 369.7,46.5 372.0,44.7 374.6,45.5 376.8,44.4 378.1,43.9 380.3,43.6 381.6,43.1 383.3,43.1 385.1,44.3 387.4,44.2 389.9,44.0 391.3,44.0 393.1,45.8 394.8,45.7 396.3,45.9 397.9,44.4 399.5,45.4 401.5,45.8 403.0,47.2 405.3,46.6 407.7,46.9 409.3,46.2 411.5,48.2 412.7,47.3 414.9,45.6 417.0,46.8 419.5,47.2 421.9,46.4 423.1,46.9 424.9,46.6 427.4,45.8 429.0,45.5 431.2,46.7 433.7,46.3 436.1,45.6 438.1,45.7 440.6,45.1 442.4,45.3 444.8,43.6 446.1,43.2 448.3,43.1 450.5,44.6 452.8,45.1 454.4,46.0 455.8,46.1 457.1,44.2 458.7,43.6 460.0,44.1 461.4,43.4 463.3,43.4 464.6,44.1 466.3,44.6 467.6,44.4 470.1,43.5 471.4,44.4 473.9,44.8 476.3,44.3 478.1,43.9 479.4,44.4 480.9,44.7 483.4,44.7 484.6,44.9 486.5,44.7 488.6,44.4 490.7,45.7 492.1,46.3 494.6,47.8 496.5,47.0 498.7,46.9 500.5,44.5 503.0,46.1 505.1,44.2 507.1,45.2 508.6,47.9 510.3,46.9 512.1,46.7 513.6,45.9 515.9,46.1 518.3,46.3 520.7,47.0 523.1,47.4 525.5,47.5 527.2,47.2 529.4,48.3 531.8,47.2 534.3,45.9 535.9,47.6 537.8,47.7 539.8,45.5 541.0,45.8 542.3,44.4 544.3,44.7 546.0,44.8 547.7,45.9 549.7,46.0 551.2,45.0 553.2,44.7 554.6,53.5" fill="#a6d3ff" opacity=".86"/></svg><div class="wl"></div><svg style="left:100.3px;top:4.800px" width="14" height="13" viewBox="0 0 14 13"><path d="M.5 4h2.300L6.400 .8v11.400L2.800 9H.5z" fill="#fff"/><g fill="none" stroke="#fff" stroke-width="1" stroke-linecap="round"><path d="M8 4.600c.9 1.100.9 2.700 0 3.800"/><path d="M9.700 3c1.800 2 1.800 5 0 7"/><path d="M11.400 1.500c2.600 2.900 2.600 7.100 0 10"/></g></svg><span class="lbl" style="left:117.700px">7.07</span><span class="lbl" style="left:152.9px">IMG_0792</span></div>
<span class="rl" style="left:5.7px">0.00</span>
<span class="rl" style="left:159.8px">2.00</span>
<span class="rl" style="left:313.9px">4.00</span>
<span class="rl" style="left:468.0px">6.00</span>
<span class="rl" style="left:622.1px">8.00</span>
<span class="rl" style="left:776.2px">10.00</span>
<span class="rl" style="left:930.3px">12.00</span>
<span class="rl" style="left:1084.4px">14.00</span>
<span class="rl" style="left:1238.5px">16.00</span>
<span class="rl" style="left:1392.6px">18.00</span>
<span class="rl" style="left:1546.7px">20.00</span>
<span class="rl" style="left:1700.8px">22.00</span>
<span class="rl" style="left:1854.9px">24.00</span>
<span class="rl" style="left:2009.0px">26.00</span>
<span class="rl" style="left:2163.1px">28.00</span>
<span class="rl" style="left:2317.2px">30.00</span>
<span class="rl" style="left:2471.3px">32.00</span>
<span class="rl" style="left:2625.4px">34.00</span>
<span class="rl" style="left:2779.5px">36.00</span>
<span class="rl" style="left:2933.6px">38.00</span>
<span class="rl" style="left:3087.7px">40.00</span>
<span class="rl" style="left:3241.8px">42.00</span>
<span class="rl" style="left:3395.9px">44.00</span>
<span class="rl" style="left:3550.0px">46.00</span>
<span class="rl" style="left:3704.1px">48.00</span>
<span class="rl" style="left:3858.2px">50.00</span>
<span class="rl" style="left:4012.3px">52.00</span>
<svg style="left:0;top:0" width="2003" height="424"><g fill="#dcdcdc"><rect x="4.50" y="420.700" width="1.800" height="3.300"/><rect x="43.02" y="420.700" width="1.800" height="3.300"/><rect x="81.55" y="420.700" width="1.800" height="3.300"/><rect x="120.07" y="420.700" width="1.800" height="3.300"/><rect x="158.60" y="420.700" width="1.800" height="3.300"/><rect x="197.12" y="420.700" width="1.800" height="3.300"/><rect x="235.65" y="420.700" width="1.800" height="3.300"/><rect x="274.18" y="420.700" width="1.800" height="3.300"/><rect x="312.70" y="420.700" width="1.800" height="3.300"/><rect x="351.22" y="420.700" width="1.800" height="3.300"/><rect x="389.75" y="420.700" width="1.800" height="3.300"/><rect x="428.27" y="420.700" width="1.800" height="3.300"/><rect x="466.80" y="420.700" width="1.800" height="3.300"/><rect x="505.33" y="420.700" width="1.800" height="3.300"/><rect x="543.85" y="420.700" width="1.800" height="3.300"/><rect x="582.38" y="420.700" width="1.800" height="3.300"/><rect x="620.90" y="420.700" width="1.800" height="3.300"/><rect x="659.42" y="420.700" width="1.800" height="3.300"/><rect x="697.95" y="420.700" width="1.800" height="3.300"/><rect x="736.48" y="420.700" width="1.800" height="3.300"/><rect x="775.00" y="420.700" width="1.800" height="3.300"/><rect x="813.52" y="420.700" width="1.800" height="3.300"/><rect x="852.05" y="420.700" width="1.800" height="3.300"/><rect x="890.57" y="420.700" width="1.800" height="3.300"/><rect x="929.10" y="420.700" width="1.800" height="3.300"/><rect x="967.62" y="420.700" width="1.800" height="3.300"/><rect x="1006.15" y="420.700" width="1.800" height="3.300"/><rect x="1044.67" y="420.700" width="1.800" height="3.300"/><rect x="1083.20" y="420.700" width="1.800" height="3.300"/><rect x="1121.72" y="420.700" width="1.800" height="3.300"/><rect x="1160.25" y="420.700" width="1.800" height="3.300"/><rect x="1198.77" y="420.700" width="1.800" height="3.300"/><rect x="1237.30" y="420.700" width="1.800" height="3.300"/><rect x="1275.83" y="420.700" width="1.800" height="3.300"/><rect x="1314.35" y="420.700" width="1.800" height="3.300"/><rect x="1352.88" y="420.700" width="1.800" height="3.300"/><rect x="1391.40" y="420.700" width="1.800" height="3.300"/><rect x="1429.92" y="420.700" width="1.800" height="3.300"/><rect x="1468.45" y="420.700" width="1.800" height="3.300"/><rect x="1506.97" y="420.700" width="1.800" height="3.300"/><rect x="1545.50" y="420.700" width="1.800" height="3.300"/><rect x="1584.02" y="420.700" width="1.800" height="3.300"/><rect x="1622.55" y="420.700" width="1.800" height="3.300"/><rect x="1661.08" y="420.700" width="1.800" height="3.300"/><rect x="1699.60" y="420.700" width="1.800" height="3.300"/><rect x="1738.12" y="420.700" width="1.800" height="3.300"/><rect x="1776.65" y="420.700" width="1.800" height="3.300"/><rect x="1815.17" y="420.700" width="1.800" height="3.300"/><rect x="1853.70" y="420.700" width="1.800" height="3.300"/><rect x="1892.22" y="420.700" width="1.800" height="3.300"/><rect x="1930.75" y="420.700" width="1.800" height="3.300"/><rect x="1969.27" y="420.700" width="1.800" height="3.300"/><rect x="2007.80" y="420.700" width="1.800" height="3.300"/><rect x="2046.32" y="420.700" width="1.800" height="3.300"/></g></svg>
<div class="abs" style="left:1002.300px;top:18px;width:3.400px;height:406px;background:#2c74c2;opacity:.9"></div>
<span class="abs" style="left:972.600px;top:0;width:60px;height:16px;line-height:16.500px;text-align:center;font-size:12.700px;color:#ece9e7;-webkit-text-stroke:.35px #ece9e7">12.28</span>
<span class="abs" style="right:8px;top:0;height:17px;line-height:17px;font-size:11.850px;color:#c4c0bd;white-space:pre;-webkit-text-stroke:.3px #c4c0bd;letter-spacing:0">My project (30 fps, SDR)  19.21 duration</span>
</div>
<span class="abs" style="left:4px;top:731px;width:36px;height:17px;line-height:17px;text-align:center;font-size:12px;font-weight:bold;color:#f1efee">+0</span>
<div class="abs" style="left:13.1px;top:754.500px;width:7.500px;height:352px;background:linear-gradient(#3b0b0b 0,#3b0b0b 38.500px,#3e3110 38.500px,#3e3110 130px,#0c4a0c 130px,#0c4a0c 189px,#0a2a0a 189px,#0a2a0a 100%)"></div>
<div class="abs" style="left:23.3px;top:754.500px;width:7.500px;height:352px;background:linear-gradient(#3b0b0b 0,#3b0b0b 38.500px,#3e3110 38.500px,#3e3110 130px,#0c4a0c 130px,#0c4a0c 189px,#0a2a0a 189px,#0a2a0a 100%)"></div>
<div class="abs" style="left:21.200px;top:754.500px;width:1.500px;height:352px;background:#3d3d3a"></div>
<div class="abs" style="left:15px;top:877.800px;width:13.800px;height:13.800px;border-radius:50%;border:1.200px solid #e2dfdc"></div>
<svg style="left:11px;top:1124px" width="22" height="22" viewBox="0 0 22 22"><g fill="none" stroke="#e6e1dd" stroke-width="1.200" stroke-linejoin="round" stroke-linecap="round"><path d="M1.600 7.200h3.600L10.600 1.600c.5-.5 1.100-.3 1.100.4v17.600c0 .7-.6.900-1.100.4L5.200 14.600H1.600z"/><path d="M14.600 7.600c1.300 1.900 1.300 4.500 0 6.400"/><path d="M17 5.200c2.600 3.300 2.600 7.900 0 11.200"/></g></svg>
<div id="tbar"></div>
<svg style="left:11px;top:1167px" width="24" height="26" viewBox="0 0 24 26"><g fill="none" stroke="#e6e1dd" stroke-width="1.250" stroke-linejoin="round"><path d="M10 1.800h10.200c.8 0 1.400.6 1.400 1.400v19.600c0 .8-.6 1.400-1.400 1.400H3.200c-.8 0-1.400-.6-1.400-1.400V14"/><path d="M1.800 7.400h8M5.800 3.400v8" /><path d="M4 16h15.500M4 19h15.500" stroke-width="1.500"/><path d="M12 12.700h7.500" stroke-width="1.500"/></g></svg><svg style="left:67px;top:1168px" width="22" height="24" viewBox="0 0 22 24"><g fill="none" stroke="#e6e1dd" stroke-width="1.250"><path d="M20 1.400H1.400v21.200H20"/><path d="M9.800 1.400v21.200" stroke-dasharray="1.200 1" stroke-width=".9"/><path d="M12.500 5.400h7.500M12.500 12h7.500M12.500 18.600h7.500"/></g><g fill="#e6e1dd"><circle cx="5.600" cy="5.400" r="1.700"/><circle cx="5.600" cy="12" r="1.700"/><circle cx="5.600" cy="18.600" r="1.700"/></g></svg><svg style="left:125px;top:1169px" width="24" height="22" viewBox="0 0 24 22"><g fill="#e6e1dd"><rect x="0.00" y="0.00" width="1.400" height="5.800"/><rect x="3.05" y="0.00" width="1.400" height="5.800"/><rect x="6.10" y="0.00" width="1.400" height="5.800"/><rect x="9.15" y="0.00" width="1.400" height="5.800"/><rect x="12.20" y="0.00" width="1.400" height="5.800"/><rect x="15.25" y="0.00" width="1.400" height="5.800"/><rect x="0.00" y="7.70" width="1.400" height="5.800"/><rect x="3.05" y="7.70" width="1.400" height="5.800"/><rect x="6.10" y="7.70" width="1.400" height="5.800"/><rect x="9.15" y="7.70" width="1.400" height="5.800"/><rect x="0.00" y="15.40" width="1.400" height="5.800"/><rect x="3.05" y="15.40" width="1.400" height="5.800"/><rect x="6.10" y="15.40" width="1.400" height="5.800"/><rect x="9.15" y="15.40" width="1.400" height="5.800"/><rect x="12.20" y="15.40" width="1.400" height="5.800"/><rect x="15.25" y="15.40" width="1.400" height="5.800"/><rect x="18.30" y="15.40" width="1.400" height="5.800"/><rect x="21.35" y="15.40" width="1.400" height="5.800"/></g></svg><svg style="left:739px;top:1168px" width="29" height="24" viewBox="0 0 29 24"><g fill="none" stroke="#3e3a3a" stroke-width="1.200" stroke-linejoin="round"><path d="M4 6V2.600c0-.7.500-1.200 1.200-1.200h21.600c.7 0 1.200.5 1.200 1.200v13.600c0 .7-.5 1.200-1.200 1.200H24"/><rect x="1" y="6" width="23" height="16.600" rx="1.200"/><path d="M12.500 10v8.600M8.200 14.300h8.600"/></g></svg><svg style="left:791px;top:1168px" width="30" height="24" viewBox="0 0 30 24"><g fill="none" stroke="#3e3a3a" stroke-width="1.200" stroke-linejoin="round"><path d="M1.400 16V2.600c0-.7.500-1.200 1.200-1.200h22.200c.7 0 1.200.5 1.200 1.200V6"/><rect x="5" y="6" width="23.600" height="16.600" rx="1.200"/><path d="M10 14.300h1M12 12.800v3M14.200 11.300v6M16.600 14.300h.6M19 11.300v6M21.200 12.800v3M23 14.300h1" stroke-width="1.300"/></g></svg><svg style="left:846px;top:1168px" width="24" height="24" viewBox="0 0 24 24"><g fill="none" stroke="#3e3a3a" stroke-width="1.300" stroke-linecap="round"><path d="M10.600 8.200l4-4.600c1.600-1.800 4.400-2 6.200-.4s2 4.400.4 6.200l-4 4.600c-1.600 1.800-4.400 2-6.200.4"/><path d="M13.400 15.800l-4 4.600c-1.600 1.800-4.400 2-6.200.4s-2-4.400-.4-6.200l4-4.600c1.600-1.800 4.400-2 6.200-.4"/></g></svg><svg style="left:899px;top:1168px" width="24" height="24" viewBox="0 0 24 24"><g fill="none" stroke="#3e3a3a" stroke-width="1.300" stroke-linejoin="round"><path d="M18.600 1.400l4 4L6.600 21.400l-5.200 1.200 1.200-5.200z"/><path d="M2.600 17.400l4 4"/></g></svg><svg style="left:949px;top:1167px" width="29" height="26" viewBox="0 0 29 26"><g fill="none" stroke="#3e3a3a" stroke-width="1.200" stroke-linejoin="round"><rect x="1.400" y="5.600" width="26" height="18.800" rx="1"/><path d="M2 5.400L25 1.400l1.600 3.800"/><path d="M14.400 9.400l1.700 3.600 3.900.5-2.900 2.700.8 3.900-3.500-2-3.500 2 .8-3.900-2.900-2.700 3.900-.5z"/></g></svg><svg style="left:1002px;top:1167px" width="29" height="26" viewBox="0 0 29 26"><g fill="none" stroke="#3e3a3a" stroke-width="1.200" stroke-linejoin="round"><path d="M1.400 24V4.600h26V24"/><rect x="9.400" y="1.600" width="10" height="5.600" rx="2"/><path d="M6 12h17M6 16h17M6 20h17"/></g></svg><svg style="left:1089px;top:1168px" width="30" height="25" viewBox="0 0 30 25"><g fill="none" stroke="#e6e1dd" stroke-width="1.300" stroke-linejoin="round" stroke-linecap="round"><path d="M19 4.600H2.800c-.8 0-1.400.6-1.400 1.400v16c0 .8.600 1.400 1.400 1.400h24.400c.8 0 1.400-.6 1.400-1.400V11"/><path d="M8 12.600l5.200 5.200L26.400 3"/></g></svg><svg style="left:1143px;top:1167px" width="28" height="26" viewBox="0 0 28 26"><g fill="none" stroke="#e6e1dd" stroke-width="1.200" stroke-linejoin="round"><circle cx="5" cy="5" r="3.200"/><circle cx="5" cy="21" r="3.200"/><path d="M7.600 7l18 13.400c-2 .8-4 .6-5.800-.4L6.800 8.200"/><path d="M7.600 19l18-13.400c-2-.8-4-.6-5.800.4L6.800 17.800"/></g><circle cx="5" cy="5" r="1" fill="#e6e1dd"/><circle cx="5" cy="21" r="1" fill="#e6e1dd"/></svg><svg style="left:1196px;top:1167px" width="26" height="26" viewBox="0 0 26 26"><g fill="none" stroke="#e6e1dd" stroke-width="1.300"><circle cx="13" cy="13.100" r="11.500"/><path d="M13 8.300v9.600M8.200 13.100h9.600"/></g></svg><svg style="left:1286px;top:1167px" width="22" height="26" viewBox="0 0 22 26"><g fill="none" stroke="#3e3a3a" stroke-width="1.200" stroke-linejoin="round"><path d="M1 4.600h20M7.400 4.400V2.200c0-.5.400-.9.900-.9h5.400c.5 0 .9.400.9.900v2.200"/><path d="M2.800 5l.8 18.400c0 .7.600 1.200 1.300 1.200h12.200c.7 0 1.300-.5 1.300-1.200L19.200 5"/><path d="M7.600 8.600v12M11 8.600v12M14.400 8.600v12"/></g></svg><svg style="left:1910px;top:1168px" width="24" height="24" viewBox="0 0 24 24"><g fill="none" stroke="#e6e1dd" stroke-width="1.300"><rect x="1.300" y="1.400" width="21.400" height="21.400" rx=".6"/><path d="M1.300 12.600h21.400" stroke-width="3"/><path d="M8.600 1.400v11" stroke-width="3"/></g></svg><svg style="left:1963px;top:1167px" width="23" height="26" viewBox="0 0 23 26"><g fill="none" stroke="#e6e1dd" stroke-width="1.300" stroke-linejoin="round" stroke-linecap="round"><path d="M7.600 6.400H2.800c-.7 0-1.200.5-1.200 1.200v15.600c0 .7.500 1.200 1.200 1.200h17.400c.7 0 1.200-.5 1.200-1.200V7.600c0-.7-.5-1.200-1.200-1.200h-4.800"/><path d="M11.500 16.600V1.400M8.200 4.600l3.300-3.400 3.300 3.400"/></g></svg><svg style="left:2013.500px;top:1167px" width="26" height="26" viewBox="0 0 26 26"><polygon points="10.34,4.40 10.97,1.17 15.03,1.17 15.66,4.40 17.20,5.04 19.93,3.20 22.80,6.07 20.96,8.80 21.60,10.34 24.83,10.97 24.83,15.03 21.60,15.66 20.96,17.20 22.80,19.93 19.93,22.80 17.20,20.96 15.66,21.60 15.03,24.83 10.97,24.83 10.34,21.60 8.80,20.96 6.07,22.80 3.20,19.93 5.04,17.20 4.40,15.66 1.17,15.03 1.17,10.97 4.40,10.34 5.04,8.80 3.20,6.07 6.07,3.20 8.80,5.04" fill="none" stroke="#e6e1dd" stroke-width="1.250" stroke-linejoin="round"/><text x="13" y="18.200" font-family="Liberation Sans, sans-serif" font-size="14.500" fill="#e6e1dd" text-anchor="middle">?</text></svg>
  </div>
</div>
<div id="dock"></div>
<svg style="left:135.7px;top:1213.5px" width="44" height="44" viewBox="0 0 44 44"><defs><clipPath id="fc"><rect width="44" height="44" rx="10"/></clipPath><linearGradient id="fg1" x1="0" y1="0" x2="0" y2="1"><stop offset="0" stop-color="#3fb0fb"/><stop offset="1" stop-color="#1a73e8"/></linearGradient><linearGradient id="fg2" x1="0" y1="0" x2="0" y2="1"><stop offset="0" stop-color="#f2f4f6"/><stop offset="1" stop-color="#cfdbe6"/></linearGradient></defs>
<g clip-path="url(#fc)"><rect width="44" height="44" fill="url(#fg1)"/><path d="M25.500 0H44v44H27c-1.500-5-2-9-2.200-13.500h-5c.2-11 2-21 5.700-30.500z" fill="url(#fg2)"/>
<path d="M25.500 0c-3.700 9.500-5.500 19.500-5.700 30.500h5c.2 4.500.7 8.500 2.200 13.500" fill="none" stroke="#1d5fb0" stroke-width=".7"/>
<path d="M8 28.500c7 7.500 21 7.500 28 0" fill="none" stroke="#1c1c1e" stroke-width="1.700" stroke-linecap="round"/>
<path d="M12.500 12v5M32 12v5" stroke="#1c1c1e" stroke-width="1.900" stroke-linecap="round"/></g></svg>
<svg style="left:192.6px;top:1213.5px" width="44" height="44" viewBox="0 0 44 44"><rect x="0" y="0" width="44" height="44" rx="10" fill="#cdd6de" /><rect x="8.0" y="8.5" width="7.600" height="7" rx="1.700" fill="#3ecb4a"/><rect x="18.4" y="8.5" width="7.600" height="7" rx="1.700" fill="#ffb30f"/><rect x="28.8" y="8.5" width="7.600" height="7" rx="1.700" fill="#ff8a1e"/><rect x="8.0" y="18.7" width="7.600" height="7" rx="1.700" fill="#f0323c"/><rect x="18.4" y="18.7" width="7.600" height="7" rx="1.700" fill="#aeb4ba"/><rect x="28.8" y="18.7" width="7.600" height="7" rx="1.700" fill="#f43a4e"/><rect x="8.0" y="28.9" width="7.600" height="7" rx="1.700" fill="#b23ad0"/><rect x="18.4" y="28.9" width="7.600" height="7" rx="1.700" fill="#2f9bff"/><rect x="28.8" y="28.9" width="7.600" height="7" rx="1.700" fill="#36c86c"/></svg>
<svg style="left:249.5px;top:1213.5px" width="44" height="44" viewBox="0 0 44 44"><defs><linearGradient id="sg" x1="0" y1="0" x2="0" y2="1"><stop offset="0" stop-color="#2aa4f6"/><stop offset="1" stop-color="#1b6fe0"/></linearGradient><linearGradient id="sbg" x1="0" y1="0" x2="0" y2="1"><stop offset="0" stop-color="#ffffff"/><stop offset="1" stop-color="#dcdcdc"/></linearGradient></defs><rect x="0" y="0" width="44" height="44" rx="10" fill="url(#sbg)" /><circle cx="22" cy="22" r="18.500" fill="url(#sg)"/><g stroke="#dff0ff" stroke-width=".6"><path d="M36.20 22.00L39.20 22.00"/><path d="M36.97 24.64L38.94 24.99"/><path d="M35.34 26.86L38.16 27.88"/><path d="M35.16 29.60L36.90 30.60"/><path d="M32.88 31.13L35.18 33.06"/><path d="M31.77 33.64L33.06 35.18"/><path d="M29.10 34.30L30.60 36.90"/><path d="M27.20 36.28L27.88 38.16"/><path d="M24.47 35.98L24.99 38.94"/><path d="M22.00 37.20L22.00 39.20"/><path d="M19.53 35.98L19.01 38.94"/><path d="M16.80 36.28L16.12 38.16"/><path d="M14.90 34.30L13.40 36.90"/><path d="M12.23 33.64L10.94 35.18"/><path d="M11.12 31.13L8.82 33.06"/><path d="M8.84 29.60L7.10 30.60"/><path d="M8.66 26.86L5.84 27.88"/><path d="M7.03 24.64L5.06 24.99"/><path d="M7.80 22.00L4.80 22.00"/><path d="M7.03 19.36L5.06 19.01"/><path d="M8.66 17.14L5.84 16.12"/><path d="M8.84 14.40L7.10 13.40"/><path d="M11.12 12.87L8.82 10.94"/><path d="M12.23 10.36L10.94 8.82"/><path d="M14.90 9.70L13.40 7.10"/><path d="M16.80 7.72L16.12 5.84"/><path d="M19.53 8.02L19.01 5.06"/><path d="M22.00 6.80L22.00 4.80"/><path d="M24.47 8.02L24.99 5.06"/><path d="M27.20 7.72L27.88 5.84"/><path d="M29.10 9.70L30.60 7.10"/><path d="M31.77 10.36L33.06 8.82"/><path d="M32.88 12.87L35.18 10.94"/><path d="M35.16 14.40L36.90 13.40"/><path d="M35.34 17.14L38.16 16.12"/><path d="M36.97 19.36L38.94 19.01"/></g><path d="M35 9L19.800 19.800l4.400 4.400z" fill="#f4434f"/><path d="M9 35l10.800-15.200 4.400 4.400z" fill="#f2f2f2"/></svg>
<svg style="left:305.9px;top:1213px" width="45" height="45" viewBox="0 0 44 44"><path d="M22 1.500c12 0 21.500 8.300 21.500 18.700 0 6.400-3.600 12-9.200 15.300 1.200 3.500 3.200 6 6 7.500-5.200.3-9.400-1.400-12.400-4.600-1.900.4-3.900.6-5.900.6C10 39 .5 30.600.5 20.200S10 1.500 22 1.500z" fill="#fca91a"/>
<path d="M22 9.500l3 7.200 7.800.6-5.900 5.100 1.800 7.600L22 25.900 15.300 30l1.800-7.600-5.900-5.100 7.800-.6z" fill="#fdf0c0"/></svg>
<svg style="left:363.3px;top:1213.5px" width="44" height="44" viewBox="0 0 44 44"><rect x="0" y="0" width="44" height="44" rx="10" fill="#2a9bf0" /><path transform="translate(-4.400 -4.600) scale(1.200)" d="M34.500 13.800c-.9.400-1.900.7-2.900.8 1-.6 1.800-1.600 2.200-2.800-1 .6-2.100 1-3.200 1.200a5 5 0 0 0-8.600 4.600c-4.200-.2-7.900-2.200-10.400-5.300a5 5 0 0 0 1.500 6.700c-.8 0-1.600-.2-2.300-.6 0 2.500 1.700 4.500 4 5-.7.200-1.500.2-2.200.1a5 5 0 0 0 4.700 3.500 10 10 0 0 1-7.400 2.100 14.200 14.200 0 0 0 7.700 2.200c9.200 0 14.300-7.700 14.300-14.300v-.7c1-.7 1.800-1.600 2.600-2.500z" fill="#fff"/></svg>
<svg style="left:420.2px;top:1213.5px" width="44" height="44" viewBox="0 0 44 44"><defs><radialGradient id="ig" cx=".2" cy="1.050" r="1.300"><stop offset="0" stop-color="#ffd34f"/><stop offset=".25" stop-color="#ff8a2b"/><stop offset=".5" stop-color="#f1324f"/><stop offset=".75" stop-color="#c62f9c"/><stop offset="1" stop-color="#6a3fd6"/></radialGradient></defs><rect x="0" y="0" width="44" height="44" rx="10" fill="url(#ig)" /><rect x="8" y="8" width="28" height="28" rx="7.500" fill="none" stroke="#fff" stroke-width="3"/><circle cx="22" cy="22" r="6.600" fill="none" stroke="#fff" stroke-width="3"/><circle cx="30.300" cy="13.700" r="1.900" fill="#fff"/></svg>
<svg style="left:475.6px;top:1212.3px" width="47" height="47" viewBox="0 0 44 44"><circle cx="22" cy="22" r="22" fill="#3827e4"/>
<path d="M21.500 37.400C15 37 9 31 8.300 24L12 14.300L14.800 28.200L16.500 8.700L19.200 26L23.600 6C26 10 28 16 28.600 19.500C27 24 25 28 25.800 30.400C27.500 32 29 26 28.600 19.500C30 16 35 14 35.700 18.500C36 23 33 29 31.900 32.600" fill="none" stroke="#fff" stroke-width="1.500" stroke-linecap="round" stroke-linejoin="round"/></svg>
<svg style="left:532.2px;top:1212px" width="47.5" height="47.5" viewBox="0 0 44 44"><circle cx="22" cy="22" r="22" fill="#fff"/><circle cx="22" cy="22" r="19.800" fill="#2f8fe8"/>
<path d="M22 6.500L34.500 35 22 30.200 9.500 35z" fill="#f4f8fc"/><path d="M22 6.500V36l-3.600-4.400z" fill="#c4d6ea"/><path d="M22 6.500V36l3.600-4.400z" fill="#dfe9f4"/></svg>
<svg style="left:590.9px;top:1213.5px" width="44" height="44" viewBox="0 0 44 44"><defs><linearGradient id="mg" x1="0" y1="0" x2="0" y2="1"><stop offset="0" stop-color="#5df064"/><stop offset="1" stop-color="#28c83e"/></linearGradient></defs><rect x="0" y="0" width="44" height="44" rx="10" fill="url(#mg)" /><path d="M22 9.500c8.300 0 15 5.300 15 11.900S30.300 33.300 22 33.300c-1.600 0-3.100-.2-4.500-.5-1.600 1.300-3.700 2.200-6 2.400 1.200-1.200 2-2.600 2.300-4.100C9.700 29 7 25.500 7 21.400c0-6.600 6.700-11.900 15-11.900z" fill="#f4f6f4"/></svg>
<svg style="left:647.8px;top:1213.5px" width="44" height="44" viewBox="0 0 44 44"><defs><clipPath id="fac"><rect width="44" height="44" rx="10"/></clipPath></defs><g clip-path="url(#fac)"><rect width="44" height="44" fill="#f6f6f6"/><rect width="44" height="11.500" fill="#f0324a"/><rect x="0" y="11.500" width="9" height="8" fill="#4ccb55"/><g stroke="#d9dfe6" stroke-width=".5"><path d="M9.0 11.500V44"/><path d="M17.7 11.500V44"/><path d="M26.4 11.500V44"/><path d="M35.1 11.500V44"/><path d="M43.8 11.500V44"/><path d="M0 19.5H44"/><path d="M0 27.7H44"/><path d="M0 35.9H44"/><path d="M0 44.1H44"/></g><rect x="18" y="19.800" width="8.400" height="8" fill="#ffc61a"/><rect x="9.300" y="28" width="8.400" height="8" fill="#41a5f5"/><rect x="26.700" y="28" width="8.400" height="8" fill="#ef4a6a"/></g></svg>
<svg style="left:704.7px;top:1213.5px" width="44" height="44" viewBox="0 0 44 44"><defs><clipPath id="mc"><rect width="44" height="44" rx="10"/></clipPath></defs><g clip-path="url(#mc)"><rect width="44" height="44" fill="#efece4"/>
<circle cx="48" cy="-4" r="43.500" fill="#f8d548"/><circle cx="48" cy="-4" r="38.500" fill="#62d05c"/><circle cx="48" cy="-4" r="31.500" fill="#f1f1ef"/><circle cx="47" cy="-3" r="14.500" fill="#6fd866"/>
<path d="M-2 7l8 2v14l-8-3z" fill="#f8d548"/>
<path d="M0 24h6v20H0z" fill="#e2ded4"/><path d="M16 30h10l6 14H16z" fill="#e4e1d8"/>
<path d="M5.500 0h10.500v44H5.500z" fill="#fbfbf9"/><path d="M8 0h5.600v22H8z" fill="#2f8cf2"/>
<circle cx="10.800" cy="26.300" r="7.200" fill="#fdfdfd"/><circle cx="10.800" cy="26.300" r="4.500" fill="#1f78ee"/>
<path d="M25 29.500c5 1.200 10 1.200 15.500 0 .8 6-2 11.500-7.700 14.500-5.800-3-8.600-8.500-7.800-14.500z" fill="#2b6fd6" stroke="#f4f4f4" stroke-width=".8"/><path d="M25.600 30c4.800 1 9.600 1 14.300 0l.1 2.600H25.500z" fill="#e8403c"/>
<text x="32.800" y="40" font-family="Liberation Sans, sans-serif" font-size="5.600" font-weight="bold" fill="#fff" text-anchor="middle">280</text></g></svg>
<svg style="left:761.6px;top:1213.5px" width="44" height="44" viewBox="0 0 44 44"><rect x="0" y="0" width="44" height="44" rx="10" fill="#fbfbfb" /><ellipse cx="22" cy="12.800" rx="5" ry="8.200" fill="#f9b416" opacity=".86" transform="rotate(0 22 22)"/><ellipse cx="22" cy="12.800" rx="5" ry="8.200" fill="#f6d21c" opacity=".86" transform="rotate(45 22 22)"/><ellipse cx="22" cy="12.800" rx="5" ry="8.200" fill="#9fcd2c" opacity=".86" transform="rotate(90 22 22)"/><ellipse cx="22" cy="12.800" rx="5" ry="8.200" fill="#37b9a0" opacity=".86" transform="rotate(135 22 22)"/><ellipse cx="22" cy="12.800" rx="5" ry="8.200" fill="#4c9be8" opacity=".86" transform="rotate(180 22 22)"/><ellipse cx="22" cy="12.800" rx="5" ry="8.200" fill="#8c6fd0" opacity=".86" transform="rotate(225 22 22)"/><ellipse cx="22" cy="12.800" rx="5" ry="8.200" fill="#d9599c" opacity=".86" transform="rotate(270 22 22)"/><ellipse cx="22" cy="12.800" rx="5" ry="8.200" fill="#f0523c" opacity=".86" transform="rotate(315 22 22)"/></svg>
<svg style="left:818.5px;top:1213.5px" width="44" height="44" viewBox="0 0 44 44"><defs><linearGradient id="ftg" x1="0" y1="0" x2="0" y2="1"><stop offset="0" stop-color="#5ded63"/><stop offset="1" stop-color="#2fc544"/></linearGradient><linearGradient id="ftc" x1="0" y1="0" x2="0" y2="1"><stop offset="0" stop-color="#ffffff"/><stop offset="1" stop-color="#cfd8d0"/></linearGradient></defs><rect x="0" y="0" width="44" height="44" rx="10" fill="url(#ftg)" /><rect x="6" y="13.500" width="22.500" height="17" rx="4" fill="url(#ftc)"/><path d="M29.800 19.200l6-4.500c.9-.6 1.700-.2 1.700.8v13c0 1-.8 1.400-1.700.8l-6-4.500z" fill="url(#ftc)"/></svg>
<svg style="left:875.4px;top:1213.5px" width="44" height="44" viewBox="0 0 44 44"><rect x="0" y="0" width="44" height="44" rx="10" fill="#fcfcfc" /><circle cx="9.500" cy="11.5" r="3.300" fill="none" stroke="#2f7cf6" stroke-width=".8"/><circle cx="9.500" cy="11.5" r="2.100" fill="#2f7cf6"/><path d="M16.500 11.5H39" stroke="#cfcfd2" stroke-width=".8"/><circle cx="9.500" cy="22" r="3.300" fill="none" stroke="#f0323c" stroke-width=".8"/><circle cx="9.500" cy="22" r="2.100" fill="#f0323c"/><path d="M16.500 22H39" stroke="#cfcfd2" stroke-width=".8"/><circle cx="9.500" cy="32.5" r="3.300" fill="none" stroke="#f7a41c" stroke-width=".8"/><circle cx="9.500" cy="32.5" r="2.100" fill="#f7a41c"/><path d="M16.500 32.5H39" stroke="#cfcfd2" stroke-width=".8"/></svg>
<svg style="left:932.3px;top:1213.5px" width="44" height="44" viewBox="0 0 44 44"><defs><linearGradient id="scg" x1="0" y1="0" x2="0" y2="1"><stop offset="0" stop-color="#2f5f9c"/><stop offset="1" stop-color="#16335f"/></linearGradient></defs><rect x="0" y="0" width="44" height="44" rx="10" fill="url(#scg)" /><g fill="none" stroke="#f3f5f8" stroke-width="2.300"><path d="M17 11.500h15.500V27"/><path d="M22 17.500h6V23"/><path d="M12 16v16h16" /><path d="M12 16v16h16v-4" stroke-width="0"/></g><path d="M12 18v14h14" fill="none" stroke="#f3f5f8" stroke-width="2.300"/></svg>
<svg style="left:987.7px;top:1212px" width="47" height="47" viewBox="0 0 44 44"><g transform="rotate(-9 22 22)"><rect x="1" y="1" width="42" height="42" rx="8" fill="#4a1c52"/><path d="M1 9a8 8 0 0 1 8-8h26a8 8 0 0 1 8 8v9H1z" fill="#393739"/>
<circle cx="9.800" cy="10" r="4.800" fill="#b832c4"/><circle cx="22" cy="10" r="3.700" fill="none" stroke="#38b0f0" stroke-width="1.700"/><circle cx="34" cy="10" r="3.700" fill="none" stroke="#7ed028" stroke-width="1.700"/>
<g fill="#b32fc0"><rect x="6" y="22.500" width="8" height="2.800" rx=".6"/><rect x="16.500" y="22.500" width="19" height="2.800" rx=".6"/><rect x="6" y="29" width="23" height="2.600" rx=".6" opacity=".8"/><rect x="6" y="35" width="16" height="2.600" rx=".6" opacity=".8"/><rect x="26" y="35" width="8" height="2.600" rx=".6" opacity=".8"/></g></g></svg>
<svg style="left:1046.1px;top:1213.5px" width="44" height="44" viewBox="0 0 44 44"><defs><linearGradient id="mug" x1="0" y1="0" x2="0" y2="1"><stop offset="0" stop-color="#fb5c74"/><stop offset="1" stop-color="#f92a45"/></linearGradient></defs><rect x="0" y="0" width="44" height="44" rx="10" fill="url(#mug)" /><path transform="translate(-4.200 -3.600) scale(1.170)" d="M17.200 12.200l15-3.400v18.800a3.900 3.300 0 1 1-2.400-3V14.300l-10.200 2.300v13.600a3.900 3.300 0 1 1-2.400-3z" fill="#fff"/></svg>
<svg style="left:1102.2px;top:1212.2px" width="45.5" height="45.5" viewBox="0 0 44 44"><g transform="rotate(-10 22 22)"><rect x="2.500" y="1" width="39" height="43" fill="#e9e4da" stroke="#4a4640" stroke-width=".9"/>
<rect x="5.500" y="4" width="7" height="7" fill="#e9e6da" stroke="#333" stroke-width=".8"/><path d="M7.500 6h3M9 6v4" stroke="#333" stroke-width=".8"/><rect x="14.500" y="4" width="24" height="7" fill="#8a8a8a"/>
<rect x="5.500" y="13" width="33" height="19" fill="#111"/><rect x="7.00" y="25.0" width="1.600" height="6" fill="#8c8c8c"/><rect x="8.55" y="22.0" width="1.600" height="9" fill="#8c8c8c"/><rect x="10.10" y="19.0" width="1.600" height="12" fill="#8c8c8c"/><rect x="11.65" y="23.0" width="1.600" height="8" fill="#8c8c8c"/><rect x="13.20" y="17.0" width="1.600" height="14" fill="#8c8c8c"/><rect x="14.75" y="20.0" width="1.600" height="11" fill="#8c8c8c"/><rect x="16.30" y="15.0" width="1.600" height="16" fill="#8c8c8c"/><rect x="17.85" y="22.0" width="1.600" height="9" fill="#8c8c8c"/><rect x="19.40" y="24.0" width="1.600" height="7" fill="#8c8c8c"/><rect x="20.95" y="19.0" width="1.600" height="12" fill="#8c8c8c"/><rect x="22.50" y="16.0" width="1.600" height="15" fill="#8c8c8c"/><rect x="24.05" y="21.0" width="1.600" height="10" fill="#8c8c8c"/><rect x="25.60" y="18.0" width="1.600" height="13" fill="#8c8c8c"/><rect x="27.15" y="14.0" width="1.600" height="17" fill="#8c8c8c"/><rect x="28.70" y="19.0" width="1.600" height="12" fill="#8c8c8c"/><rect x="30.25" y="22.0" width="1.600" height="9" fill="#8c8c8c"/><rect x="31.80" y="17.0" width="1.600" height="14" fill="#8c8c8c"/><rect x="33.35" y="20.0" width="1.600" height="11" fill="#8c8c8c"/><rect x="34.90" y="23.0" width="1.600" height="8" fill="#8c8c8c"/><rect x="36.45" y="25.0" width="1.600" height="6" fill="#8c8c8c"/>
<rect x="5.500" y="34" width="33" height="7.500" fill="#b9b7ae"/></g></svg>
<svg style="left:1159.9px;top:1213.5px" width="44" height="44" viewBox="0 0 44 44"><rect x="0" y="0" width="44" height="44" rx="10" fill="#fbfbfb" /><defs><clipPath id="nc"><rect x="9" y="9" width="26" height="26" rx="3"/></clipPath></defs><g clip-path="url(#nc)"><rect x="9" y="9" width="26" height="26" fill="#f8f8f8"/><path d="M9 9h8.500L35 26.500V35h-8.500L9 17.500z" fill="#f43a52"/><path d="M9 24.500L19.500 35H9z" fill="#f8566c"/><path d="M35 19.500L24.500 9H35z" fill="#e8304a"/></g></svg>
<svg style="left:1216.8px;top:1213.5px" width="44" height="44" viewBox="0 0 44 44"><rect x="0" y="0" width="44" height="44" rx="10" fill="#e9ecef" /><defs><filter id="pxb"><feGaussianBlur stdDeviation=".8"/></filter></defs><g filter="url(#pxb)"><circle cx="22" cy="12" r="7" fill="#f8b020"/><circle cx="28" cy="15" r="5" fill="#f6c030"/><circle cx="13" cy="26" r="6.500" fill="#a04a9a"/><circle cx="17" cy="33" r="6" fill="#7a62c8"/><circle cx="28" cy="33" r="6" fill="#3a98e0"/><circle cx="34" cy="26" r="4" fill="#4cc070"/><circle cx="22" cy="28" r="7" fill="#7a3a8a"/><ellipse cx="19" cy="20" rx="11" ry="5.500" fill="#ee3a5a"/><ellipse cx="24" cy="17" rx="7" ry="3.500" fill="#f26a4a"/></g>
<path d="M42-2.500L28.400 30.600l-3.800-1.900z" fill="#f4f4f2" stroke="#b4b4b4" stroke-width=".4"/><path d="M28.400 30.600l-3.800-1.900-3.400 9.500c-.8 3-1.300 5.500-1.700 8 2-2 3.600-4.200 4.900-6.800z" fill="#4e3226"/></svg>
<svg style="left:1270.5px;top:1209.8px" width="50.5" height="50.5" viewBox="0 0 44 44"><rect x="0" y="0" width="44" height="44" rx="8" fill="#06203a" /><text x="22" y="32" font-family="Liberation Sans, sans-serif" font-size="25" font-weight="bold" fill="#36a6fa" text-anchor="middle" letter-spacing="-.5">Lr</text></svg>
<svg style="left:1330.6px;top:1213.5px" width="44" height="44" viewBox="0 0 44 44"><defs><linearGradient id="bfg" x1="0" y1="0" x2="0" y2="1"><stop offset="0" stop-color="#4a423c"/><stop offset="1" stop-color="#2c2825"/></linearGradient></defs><rect x="0" y="0" width="44" height="44" rx="10" fill="url(#bfg)" /><g fill="#fcb815"><path d="M20.500 19.500C17 11 9.500 6.500 5.500 8.500c-3 2 0 12 5.500 15 3 1.500 7 1 9.500-.5z"/><path d="M23.500 19.500C27 11 34.500 6.500 38.500 8.500c3 2 0 12-5.500 15-3 1.500-7 1-9.500-.5z"/><path d="M20.300 24.300c-5-.6-12 .2-14.500 3.200-1.500 2 1 6 3.500 9 1.500 2 4 2.600 6 1 2.800-2.400 4.600-7 5-13.200z"/><path d="M23.700 24.300c5-.6 12 .2 14.500 3.200 1.500 2-1 6-3.500 9-1.500 2-4 2.600-6 1-2.800-2.400-4.600-7-5-13.200z"/></g>
<path d="M22 11.500c1.300 2.500 2 5 2 7.500l-1.300 15c-.2 1.300-1.200 1.300-1.400 0L20 19c0-2.500.7-5 2-7.500z" fill="#e8a010" stroke="#2c2825" stroke-width=".7"/><circle cx="22" cy="18.500" r=".9" fill="#2c2825"/></svg>
<svg style="left:1387.5px;top:1213.5px" width="44" height="44" viewBox="0 0 44 44"><defs><clipPath id="kc"><rect width="44" height="44" rx="10"/></clipPath></defs><g clip-path="url(#kc)"><rect width="44" height="44" fill="#fbfbfb"/>
<g fill="none" stroke="#e4e6ea" stroke-width="1.200"><rect x="-3" y="22" width="13" height="9" rx="2.500"/><rect x="34" y="22" width="13" height="9" rx="2.500"/><rect x="-3" y="33" width="13" height="9" rx="2.500"/><rect x="34" y="33" width="13" height="9" rx="2.500"/><rect x="12" y="33" width="20" height="9" rx="2.500"/></g>
<path d="M10 5.500h24l2.500 14h-29z" fill="#2f8df2"/><path d="M12.300 7.500h19.400l1.800 9.600h-23z" fill="#fbfbfb"/><rect x="7.300" y="18.800" width="29.400" height="2.200" rx=".6" fill="#2a7ee6"/>
<circle cx="22" cy="12" r="4" fill="#45b0f4"/><path d="M22 12V8a4 4 0 0 1 3.900 4.800z" fill="#f0463c"/><path d="M22 12l3.900.8a4 4 0 0 1-2.500 3z" fill="#f7b32a"/><path d="M22 12l1.400 3.800a4 4 0 0 1-5-1.700z" fill="#3cc15a"/>
<rect x="20.800" y="20.500" width="2.400" height="17.500" fill="#9fb6d0"/><rect x="15" y="37.500" width="14" height="1.800" rx=".8" fill="#8fa6c0"/></g></svg>
<svg style="left:1442.4px;top:1211.6px" width="48" height="48" viewBox="0 0 44 44"><defs><linearGradient id="zg" x1="0" y1="0" x2="0" y2="1"><stop offset="0" stop-color="#3d9df8"/><stop offset="1" stop-color="#2176ee"/></linearGradient></defs><rect width="44" height="44" rx="15" fill="url(#zg)"/><rect x="8.500" y="14.500" width="18.500" height="15" rx="3.500" fill="#fff"/><path d="M28.300 20l6.200-4.400c.7-.5 1.300-.2 1.300.7v11.400c0 .9-.6 1.200-1.300.7L28.300 24z" fill="#fff"/></svg>
<svg style="left:1498.0px;top:1209.5px" width="50.5" height="50.5" viewBox="0 0 44 44"><path d="M8.500 10V2.800h27V10" fill="none" stroke="#b86a30" stroke-width="1.500"/><path d="M8 3.600h28" stroke="#c47a3c" stroke-width="1.300"/>
<rect x=".8" y="9.500" width="42.400" height="33.700" rx="2.600" fill="#a55a28"/><rect x="1.900" y="10.600" width="40.200" height="31.500" rx="1.800" fill="#1d1b1a"/>
<rect x="3.200" y="12" width="37.600" height="11.500" rx="1" fill="#0c0b0b" stroke="#3a3633" stroke-width=".6"/><path d="M9 19.500c6-3.500 12-4 18-3.200" fill="none" stroke="#f1ebde" stroke-width="2"/><path d="M28 16.600c2.400.4 4.400 1.100 6.500 2.400" fill="none" stroke="#ee4a52" stroke-width="2.200"/><path d="M21.500 16v8" stroke="#c98a3a" stroke-width=".7"/>
<rect x="3.200" y="25" width="37.600" height="16" rx="1" fill="#2a2827"/><g stroke="#3d3a38" stroke-width=".5"><path d="M4 28h36M4 30.500h36M4 33h36M4 35.500h36M4 38h36"/></g>
<circle cx="22" cy="33" r="6" fill="#c9c5bf"/><circle cx="22" cy="33" r="4.400" fill="#8a8580"/><circle cx="22" cy="33" r="3" fill="#3a3433"/><circle cx="22" cy="33" r="1.700" fill="#f0443c"/></svg>
<svg style="left:1554.7px;top:1210.3px" width="51" height="51" viewBox="0 0 44 44"><circle cx="22" cy="22" r="22" fill="#2467f2"/>
<g transform="rotate(46 22 22) translate(22 22) scale(1.300 .98) translate(-22 -21.500)"><rect x="17.500" y="2" width="9" height="13" rx="4.500" fill="#f4f4f4"/><g fill="#222"><circle cx="20.300" cy="5.500" r=".9"/><circle cx="23.700" cy="5.500" r=".9"/><circle cx="20.300" cy="8.500" r=".9"/><circle cx="23.700" cy="8.500" r=".9"/><circle cx="22" cy="11.500" r=".9"/></g>
<rect x="17.500" y="13.500" width="9" height="2.600" fill="#9aa0a8"/><rect x="17.500" y="16" width="9" height="15" fill="#fbd23c"/><path d="M20.500 16v15M23.500 16v15" stroke="#e0a818" stroke-width=".7"/>
<path d="M17.500 31h9L22 40.500z" fill="#f3dcb8"/><path d="M20.300 37.300h3.400L22 40.500z" fill="#222"/></g></svg>
<svg style="left:1615.1px;top:1213.5px" width="44" height="44" viewBox="0 0 44 44"><defs><linearGradient id="asg" x1="0" y1="0" x2="0" y2="1"><stop offset="0" stop-color="#2fb2fb"/><stop offset="1" stop-color="#1c6cf0"/></linearGradient></defs><rect x="0" y="0" width="44" height="44" rx="10" fill="url(#asg)" /><g fill="none" stroke="#fff" stroke-width="2.800" stroke-linecap="round"><path d="M24.300 9.500L11.800 31.200"/><path d="M19.700 9.500l12.500 21.700"/><path d="M8 27h13.500M28 27h8"/><path d="M9.800 33.800l1.500-2.600"/></g></svg>
<svg style="left:1672.0px;top:1213.5px" width="44" height="44" viewBox="0 0 44 44"><defs><linearGradient id="spg" x1="0" y1="0" x2="0" y2="1"><stop offset="0" stop-color="#dfe3e8"/><stop offset="1" stop-color="#8e8c8a"/></linearGradient></defs><rect x="0" y="0" width="44" height="44" rx="10" fill="url(#spg)" /><circle cx="22" cy="22" r="17.500" fill="#5c5a58"/><circle cx="22" cy="22" r="17.500" fill="none" stroke="#3c3a38" stroke-width="1.600" stroke-dasharray="1.300 1.100"/><circle cx="22" cy="22" r="14.300" fill="#a8a6a4"/><circle cx="22" cy="22" r="12.300" fill="#5e5c5a"/><path d="M22 22L22.0 9.0" stroke="#b4b2b0" stroke-width="2.600"/><path d="M22 22L10.7 28.5" stroke="#b4b2b0" stroke-width="2.600"/><path d="M22 22L33.3 28.5" stroke="#b4b2b0" stroke-width="2.600"/><circle cx="22" cy="22" r="3.400" fill="#b4b2b0"/><circle cx="22" cy="22" r="1.700" fill="#5e5c5a"/></svg>
<svg style="left:1728.9px;top:1213.5px" width="44" height="44" viewBox="0 0 44 44"><defs><clipPath id="lfc"><rect width="44" height="44" rx="10"/></clipPath></defs><g clip-path="url(#lfc)"><rect width="44" height="44" fill="#071c3a"/>
<path d="M0 20c10-2 20-4 28-4h16v6H30c-8 0-14 12-20 22H0z" fill="#1c3fa8"/>
<path d="M0 26c10-4 20-8 28-9l16-1v6H30c-8 0-14 12-20 22H0z" fill="#2a6fe0"/>
<path d="M0 33c10-8 18-14 28-16h16v5H30c-8 0-14 12-20 22H0z" fill="#3aa2f4"/>
<path d="M0 40c8-10 18-21 28-23h16v5H30c-8 0-14 12-20 22H0z" fill="#7fc4fa"/>
<path d="M4 44c8-12 16-25 26-27.500h14V22H31c-7 0-13 12-19 22z" fill="#3ee05a"/></g></svg>
<div class="abs" style="left:1792px;top:1213px;width:1.200px;height:49px;background:#5f456f"></div>
<svg style="left:1807.800px;top:1212.700px" width="50.700" height="46" viewBox="0 0 44 40" preserveAspectRatio="none"><defs><linearGradient id="dlg" x1="0" y1="0" x2="0" y2="1"><stop offset="0" stop-color="#7cc4fb"/><stop offset="1" stop-color="#58a8f0"/></linearGradient></defs>
<path d="M0 5.500C0 3.500 1.500 2 3.500 2h11c1.500 0 2.500.5 3.500 1.500l2 2h20.500c2 0 3.500 1.500 3.500 3.500v4H0z" fill="#4c9ae8"/>
<rect x="0" y="8" width="44" height="31" rx="3" fill="url(#dlg)"/>
<circle cx="22" cy="20.800" r="8.200" fill="#4a9cee"/><path d="M22 16.300v8.500M18.500 21.800L22 25.300l3.500-3.500" fill="none" stroke="#9ad0fc" stroke-width="1.600" stroke-linecap="round" stroke-linejoin="round"/></svg>
<svg style="left:1869.800px;top:1210.200px" width="40.500" height="49.500" viewBox="0 0 40 49" preserveAspectRatio="none"><defs><linearGradient id="trg" x1="0" y1="0" x2="1" y2="0"><stop offset="0" stop-color="#d8dcdc"/><stop offset=".35" stop-color="#f4f6f6"/><stop offset=".7" stop-color="#e6e9e9"/><stop offset="1" stop-color="#c8cccc"/></linearGradient></defs>
<path d="M1.500 6h37l-4.500 39c-.3 2.500-1.500 3.500-4 3.500H10c-2.500 0-3.700-1-4-3.500z" fill="url(#trg)"/>
<ellipse cx="20" cy="6" rx="18.500" ry="4.500" fill="#eef0f0"/><ellipse cx="20" cy="6.400" rx="16.500" ry="3.300" fill="#c9cece"/></svg>
<div class="dot" style="left:155.0px"></div>
<div class="dot" style="left:268.8px"></div>
<div class="dot" style="left:1748.2px"></div>
</body>
</html>
